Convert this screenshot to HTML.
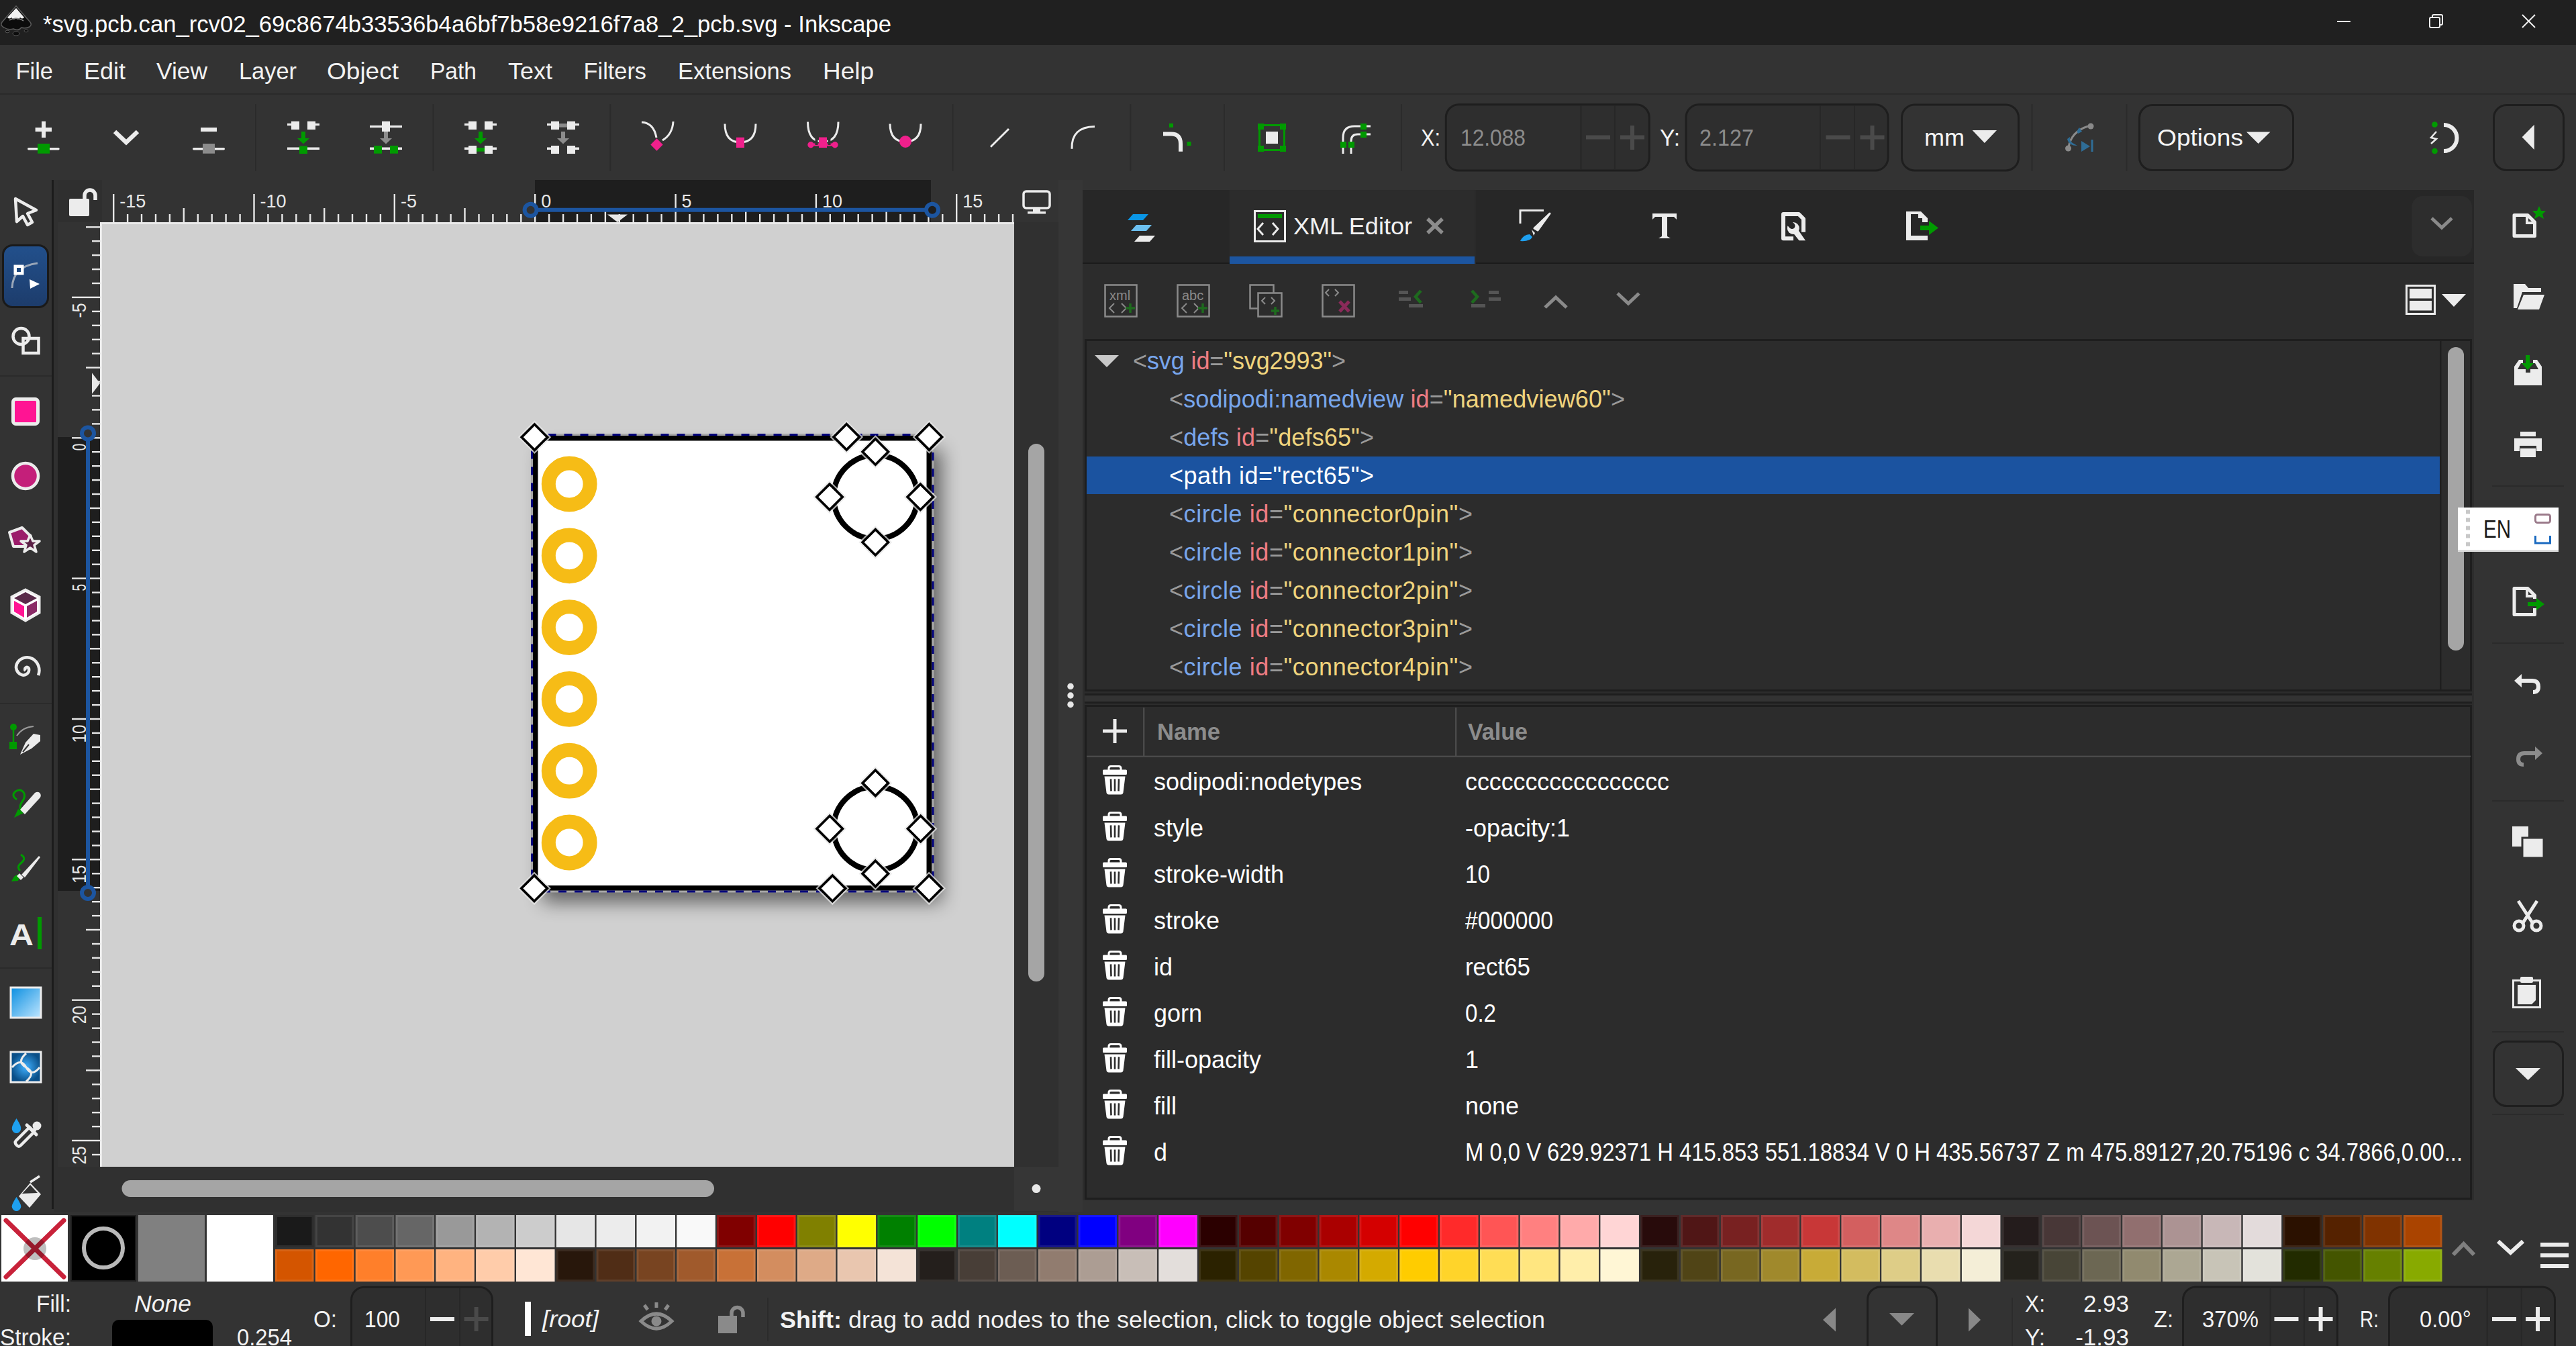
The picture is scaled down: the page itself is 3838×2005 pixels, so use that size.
<!DOCTYPE html><html><head><meta charset="utf-8"><style>html,body{margin:0;padding:0;background:#333;overflow:hidden}svg{display:block} text{font-family:"Liberation Sans",sans-serif}</style></head><body><svg width="3838" height="2005" viewBox="0 0 3838 2005"><rect x="0" y="0" width="3838" height="2005" fill="#333333" />
<rect x="0" y="0" width="3838" height="67" fill="#202020" />
<g><path d="M24,9 L45,33 Q48,37 44,40 Q38,43 32,41 Q27,47 20,43 Q12,45 6,41 Q0,38 3,33Z" fill="#0c0c0c" stroke="#5a5a5a" stroke-width="1.5"/><path d="M24,12 L36,26 Q33,29 30,26 Q27,31 24,27 Q20,31 17,26 Q14,29 11,26Z" fill="#f2f2f2"/><path d="M14,30 Q24,24 35,31" fill="none" stroke="#888" stroke-width="1.5"/><ellipse cx="24" cy="50" rx="5" ry="3" fill="#0c0c0c" stroke="#555" stroke-width="1"/><ellipse cx="11" cy="47" rx="3" ry="1.8" fill="#0c0c0c" stroke="#555" stroke-width="1"/><ellipse cx="39" cy="46" rx="3" ry="1.8" fill="#0c0c0c" stroke="#555" stroke-width="1"/></g>
<text x="64" y="48" font-size="35" fill="#ffffff" font-weight="normal" font-style="normal" text-anchor="start" textLength="1264" lengthAdjust="spacingAndGlyphs" >*svg.pcb.can_rcv02_69c8674b33536b4a6bf7b58e9216f7a8_2_pcb.svg - Inkscape</text>
<g stroke="#f0f0f0" stroke-width="2" fill="none"><line x1="3482" y1="32" x2="3502" y2="32"/><rect x="3620" y="26" width="15" height="15" rx="2"/><path d="M3624,26 V24 Q3624,22 3626,22 H3637 Q3639,22 3639,24 V35 Q3639,37 3637,37 H3635"/><line x1="3758" y1="22" x2="3777" y2="41"/><line x1="3777" y1="22" x2="3758" y2="41"/></g>
<rect x="0" y="67" width="3838" height="73" fill="#333333" />
<rect x="0" y="139" width="3838" height="2" fill="#2a2a2a" />
<text x="23.5" y="117.5" font-size="35" fill="#f2f2f2" font-weight="normal" font-style="normal" text-anchor="start" textLength="55.5" lengthAdjust="spacingAndGlyphs" >File</text>
<text x="125" y="117.5" font-size="35" fill="#f2f2f2" font-weight="normal" font-style="normal" text-anchor="start" textLength="62" lengthAdjust="spacingAndGlyphs" >Edit</text>
<text x="233" y="117.5" font-size="35" fill="#f2f2f2" font-weight="normal" font-style="normal" text-anchor="start" textLength="76" lengthAdjust="spacingAndGlyphs" >View</text>
<text x="356" y="117.5" font-size="35" fill="#f2f2f2" font-weight="normal" font-style="normal" text-anchor="start" textLength="86" lengthAdjust="spacingAndGlyphs" >Layer</text>
<text x="487" y="117.5" font-size="35" fill="#f2f2f2" font-weight="normal" font-style="normal" text-anchor="start" textLength="107" lengthAdjust="spacingAndGlyphs" >Object</text>
<text x="641" y="117.5" font-size="35" fill="#f2f2f2" font-weight="normal" font-style="normal" text-anchor="start" textLength="69" lengthAdjust="spacingAndGlyphs" >Path</text>
<text x="757" y="117.5" font-size="35" fill="#f2f2f2" font-weight="normal" font-style="normal" text-anchor="start" textLength="66" lengthAdjust="spacingAndGlyphs" >Text</text>
<text x="869.6" y="117.5" font-size="35" fill="#f2f2f2" font-weight="normal" font-style="normal" text-anchor="start" textLength="93.4" lengthAdjust="spacingAndGlyphs" >Filters</text>
<text x="1010" y="117.5" font-size="35" fill="#f2f2f2" font-weight="normal" font-style="normal" text-anchor="start" textLength="169" lengthAdjust="spacingAndGlyphs" >Extensions</text>
<text x="1226" y="117.5" font-size="35" fill="#f2f2f2" font-weight="normal" font-style="normal" text-anchor="start" textLength="76" lengthAdjust="spacingAndGlyphs" >Help</text>
<rect x="380.0" y="155" width="2" height="100" fill="#2b2b2b" />
<rect x="644.4" y="155" width="2" height="100" fill="#2b2b2b" />
<rect x="908.3" y="155" width="2" height="100" fill="#2b2b2b" />
<rect x="1418.5" y="155" width="2" height="100" fill="#2b2b2b" />
<rect x="1683.3" y="155" width="2" height="100" fill="#2b2b2b" />
<rect x="1823.0" y="155" width="2" height="100" fill="#2b2b2b" />
<rect x="2087.0" y="155" width="2" height="100" fill="#2b2b2b" />
<rect x="3026.5" y="155" width="2" height="100" fill="#2b2b2b" />
<rect x="3167.4" y="155" width="2" height="100" fill="#2b2b2b" />
<g><rect x="52.6" y="190" width="24.4" height="6" fill="#ececec"/><rect x="62" y="180.7" width="6" height="24.3" fill="#ececec"/><rect x="41" y="220" width="47.7" height="3.5" rx="1.7" fill="#ececec"/><rect x="56" y="214" width="18" height="14.7" fill="#009a00"/></g>
<path d="M171,196 L188,212 L205,196" fill="none" stroke="#ececec" stroke-width="6.5"/>
<g><rect x="299" y="190" width="24" height="6" fill="#ececec"/><rect x="287" y="220" width="48" height="3.5" rx="1.7" fill="#ececec"/><rect x="302" y="214" width="18" height="14.7" fill="#8c8c8c"/></g>
<g><rect x="428" y="183.8" width="8" height="3.3" fill="#ececec"/><rect x="468" y="183.8" width="8" height="3.3" fill="#ececec"/><rect x="434" y="180.7" width="12" height="12.3" fill="#ececec"/><rect x="458" y="180.7" width="12" height="12.3" fill="#ececec"/><rect x="449" y="196" width="6" height="10.5" fill="#009a00"/><path d="M443,206 H461 L452,214.5Z" fill="#009a00"/><rect x="428" y="219.5" width="48" height="3.5" fill="#ececec"/><rect x="446" y="217.5" width="12" height="11.5" fill="#009a00"/></g>
<g><rect x="551" y="186.8" width="48" height="3.3" fill="#ececec"/><rect x="569" y="180.7" width="12" height="15.3" fill="#ececec"/><rect x="572" y="196" width="6" height="10.5" fill="#8c8c8c"/><path d="M566,206 H584 L575,214.5Z" fill="#8c8c8c"/><rect x="551" y="219.5" width="48" height="3.5" fill="#ececec"/><rect x="557" y="217" width="12" height="11.7" fill="#009a00"/><rect x="581" y="217" width="12" height="11.7" fill="#009a00"/></g>
<g><rect x="692" y="183.8" width="8" height="3.3" fill="#ececec"/><rect x="732" y="183.8" width="8" height="3.3" fill="#ececec"/><rect x="698" y="180.7" width="12" height="12.3" fill="#ececec"/><rect x="722" y="180.7" width="12" height="12.3" fill="#ececec"/><rect x="713" y="196" width="6" height="10.5" fill="#009a00"/><path d="M707,206 H725 L716,214.5Z" fill="#009a00"/><rect x="692" y="219.5" width="8" height="3.5" fill="#ececec"/><rect x="732" y="219.5" width="8" height="3.5" fill="#ececec"/><rect x="698" y="217" width="12" height="12" fill="#ececec"/><rect x="722" y="217" width="12" height="12" fill="#ececec"/><rect x="710" y="220" width="12" height="5.7" fill="#009a00"/></g>
<g><rect x="815" y="183.8" width="8" height="3.3" fill="#ececec"/><rect x="855" y="183.8" width="8" height="3.3" fill="#ececec"/><rect x="821" y="180.7" width="12" height="12.3" fill="#ececec"/><rect x="845" y="180.7" width="12" height="12.3" fill="#ececec"/><rect x="833" y="184" width="12" height="5.6" fill="#8c8c8c"/><rect x="836" y="196" width="6" height="10.5" fill="#8c8c8c"/><path d="M830,206 H848 L839,214.5Z" fill="#8c8c8c"/><rect x="815" y="219.5" width="8" height="3.5" fill="#ececec"/><rect x="855" y="219.5" width="8" height="3.5" fill="#ececec"/><rect x="821" y="217" width="12" height="12" fill="#ececec"/><rect x="845" y="217" width="12" height="12" fill="#ececec"/></g>
<g fill="none" stroke="#ececec" stroke-width="3"><path d="M956,182 Q974,183 978,205"/><path d="M1003,181 Q1002,200 987,209"/></g><rect x="972" y="209" width="13" height="13" fill="#f0208c" transform="rotate(45 978.5 215.5)"/>
<path d="M1080,184.5 Q1080,212 1103,212 Q1126,212 1126,184.5" fill="none" stroke="#ececec" stroke-width="3"/><rect x="1097" y="204.7" width="12" height="15.3" fill="#f0208c"/>
<path d="M1203.5,181.4 Q1203.5,211 1226,211 Q1249,211 1249,181.4" fill="none" stroke="#ececec" stroke-width="3"/><rect x="1220" y="204.7" width="12" height="15.3" fill="#f0208c"/><rect x="1208" y="213.5" width="36" height="4" fill="#f0208c"/><circle cx="1208" cy="215.7" r="4.7" fill="#f0208c"/><circle cx="1244" cy="215.7" r="4.7" fill="#f0208c"/><rect x="1214.5" y="204" width="4" height="12" fill="#333"/><rect x="1233.5" y="204" width="4" height="12" fill="#333"/><rect x="1220" y="204.7" width="12" height="15.3" fill="#f0208c"/>
<path d="M1326,184.5 Q1326,211 1349,211 Q1372,211 1372,184.5" fill="none" stroke="#ececec" stroke-width="3"/><circle cx="1349" cy="211" r="9" fill="#f0208c"/>
<line x1="1476" y1="218.7" x2="1503" y2="192" stroke="#ececec" stroke-width="3"/>
<path d="M1597,221.7 Q1596,189 1631,188.5" fill="none" stroke="#ececec" stroke-width="3"/>
<path d="M1733,199.5 H1745 Q1759,199.5 1759,214 V225.7" fill="none" stroke="#ececec" stroke-width="6"/><rect x="1742" y="183.8" width="6" height="6" fill="#009a00"/><rect x="1768.6" y="211" width="6" height="6" fill="#009a00"/>
<rect x="1876.5" y="186.5" width="37" height="37" fill="none" stroke="#009a00" stroke-width="3"/><rect x="1874" y="184" width="9" height="9" fill="#009a00"/><rect x="1874" y="217" width="9" height="9" fill="#009a00"/><rect x="1907" y="184" width="9" height="9" fill="#009a00"/><rect x="1907" y="217" width="9" height="9" fill="#009a00"/><rect x="1886" y="196" width="18" height="18" fill="#ececec"/>
<g fill="none" stroke="#ececec" stroke-width="3"><path d="M2001,229 V205 Q2001,188 2018,188 H2042"/><path d="M2013,229 V210 Q2013,200 2023,200 H2042"/></g><rect x="1997" y="211" width="9" height="9" fill="#009a00"/><rect x="2009" y="211" width="9" height="9" fill="#009a00"/><rect x="2027" y="184" width="9" height="9" fill="#009a00"/><rect x="2027" y="196" width="9" height="9" fill="#009a00"/>
<text x="2117" y="216.8" font-size="35" fill="#f5f5f5" font-weight="normal" font-style="normal" text-anchor="start" textLength="29" lengthAdjust="spacingAndGlyphs" >X:</text>
<rect x="2154.3" y="155.8" width="302.89999999999964" height="98.29999999999998" rx="19" fill="#2e2e2e" stroke="#1e1e1e" stroke-width="3"/>
<rect x="2354.4" y="157.3" width="2" height="95.29999999999998" fill="#272727" />
<rect x="2404.9" y="157.3" width="2" height="95.29999999999998" fill="#272727" />
<text x="2176" y="216.8" font-size="35" fill="#8c8c8c" font-weight="normal" font-style="normal" text-anchor="start" textLength="97" lengthAdjust="spacingAndGlyphs" >12.088</text>
<rect x="2363" y="201.5" width="36" height="6" fill="#4a4a4a" />
<rect x="2414" y="201.5" width="36" height="6" fill="#4a4a4a" />
<rect x="2429" y="187" width="6" height="36" fill="#4a4a4a" />
<text x="2473" y="216.8" font-size="35" fill="#f5f5f5" font-weight="normal" font-style="normal" text-anchor="start" textLength="30" lengthAdjust="spacingAndGlyphs" >Y:</text>
<rect x="2512.0" y="155.8" width="301.0" height="98.29999999999998" rx="19" fill="#2e2e2e" stroke="#1e1e1e" stroke-width="3"/>
<rect x="2711" y="157.3" width="2" height="95.29999999999998" fill="#272727" />
<rect x="2762" y="157.3" width="2" height="95.29999999999998" fill="#272727" />
<text x="2532" y="216.8" font-size="35" fill="#8c8c8c" font-weight="normal" font-style="normal" text-anchor="start" textLength="81" lengthAdjust="spacingAndGlyphs" >2.127</text>
<rect x="2720.5" y="201.5" width="36" height="6" fill="#4a4a4a" />
<rect x="2771.5" y="201.5" width="36" height="6" fill="#4a4a4a" />
<rect x="2786.5" y="187" width="6" height="36" fill="#4a4a4a" />
<rect x="2833.5" y="156" width="174" height="98" rx="19" fill="#333" stroke="#1e1e1e" stroke-width="3"/>
<text x="2867" y="216.8" font-size="35" fill="#f5f5f5" font-weight="normal" font-style="normal" text-anchor="start" textLength="60" lengthAdjust="spacingAndGlyphs" >mm</text>
<path d="M2938.6,194 H2975 L2956.8,213Z" fill="#ececec"/>
<g><path d="M3082,219 Q3086,196 3111,188" fill="none" stroke="#8a8a8a" stroke-width="3"/><circle cx="3081.5" cy="221" r="4.5" fill="#8a8a8a"/><circle cx="3115" cy="188" r="4.5" fill="#8a8a8a"/><path d="M3080,207 Q3082,217 3095,217 L3088,213 Q3083,210 3084,204Z" fill="#2f6d96"/><path d="M3098,190 Q3093,195 3096,199 L3102,196Z" fill="#2f6d96"/><path d="M3101,210 L3114,218 L3101,226Z" fill="#2f6d96"/><rect x="3115.5" y="208" width="3" height="18" fill="#2f6d96"/></g>
<rect x="3187.5" y="156.5" width="229" height="97" rx="19" fill="#333" stroke="#1e1e1e" stroke-width="3"/>
<text x="3214" y="216.8" font-size="35" fill="#f5f5f5" font-weight="normal" font-style="normal" text-anchor="start" textLength="128" lengthAdjust="spacingAndGlyphs" >Options</text>
<path d="M3347,196.6 H3382.5 L3364.7,214Z" fill="#ececec"/>
<path d="M3641,186 A19.5,19.5 0 0 1 3641,225" fill="none" stroke="#ececec" stroke-width="6"/><circle cx="3627.5" cy="185.5" r="4.3" fill="#009a00"/><circle cx="3627.5" cy="225" r="4.3" fill="#009a00"/><path d="M3630,196 L3622,205 L3630,207 L3622,214" fill="none" stroke="#ececec" stroke-width="2.5"/>
<rect x="3715.5" y="156.5" width="104" height="97" rx="19" fill="#333" stroke="#1e1e1e" stroke-width="3"/>
<path d="M3775.8,185.7 V222.9 L3757.6,204.3Z" fill="#ececec"/>
<rect x="77" y="268" width="3" height="1533" fill="#1c1c1c" />
<rect x="0" y="559" width="77" height="2" fill="#2b2b2b" />
<rect x="0" y="1047" width="77" height="2" fill="#2b2b2b" />
<rect x="0" y="1441" width="77" height="2" fill="#2b2b2b" />
<defs><linearGradient id="selg" x1="0" y1="0" x2="0" y2="1"><stop offset="0" stop-color="#22508c"/><stop offset="1" stop-color="#1d3c6b"/></linearGradient><linearGradient id="gradt" x1="0" y1="0" x2="1" y2="1"><stop offset="0" stop-color="#0a8ee0"/><stop offset="1" stop-color="#bfe6ff"/></linearGradient><radialGradient id="meshg"><stop offset="0" stop-color="#3fb0ff"/><stop offset="1" stop-color="#0a4f88"/></radialGradient><filter id="pshadow" x="-20%" y="-20%" width="140%" height="140%"><feGaussianBlur stdDeviation="14"/></filter></defs>
<rect x="4.5" y="365.5" width="67" height="92" rx="14" fill="url(#selg)" stroke="#1a1a1a" stroke-width="3"/>
<path d="M23,296 L54,313 L41,318 L48,331 L41,335 L34,322 L25,330Z" fill="none" stroke="#ececec" stroke-width="4.5" stroke-linejoin="round"/>
<path d="M18,429 Q19,397 56,392" fill="none" stroke="#9aa7b8" stroke-width="3"/><rect x="20.5" y="394.5" width="15" height="15" fill="#fff"/><rect x="25" y="399" width="6" height="6" fill="#1f4a80"/><path d="M44,416 L59,423 L45,430Z" fill="#fff"/>
<circle cx="31.5" cy="501" r="12" fill="none" stroke="#ececec" stroke-width="4.5"/><rect x="34.5" y="504" width="23" height="22" fill="none" stroke="#ececec" stroke-width="4.5"/>
<rect x="19.5" y="594.5" width="37" height="37" rx="4" fill="#ff1493" stroke="#ececec" stroke-width="5"/>
<circle cx="38" cy="709" r="19" fill="#c41f7a" stroke="#ececec" stroke-width="4.5"/>
<path d="M14,793 L33,786 L46,799 L40,814 L20,814Z" fill="#9b1c6a" stroke="#ececec" stroke-width="4" stroke-linejoin="round"/><path d="M45,797 L49,806 L59,806 L51,812 L54,822 L45,816 L36,822 L39,812 L31,806 L41,806Z" fill="#5a1f45" stroke="#ececec" stroke-width="3.5" stroke-linejoin="round"/>
<path d="M38,878 L59,889 L59,913 L38,925 L17,913 L17,889Z" fill="#fff" stroke="#ececec" stroke-width="3"/><path d="M38,882 L55,891 L38,900 L21,891Z" fill="#5a2a4a"/><path d="M21,895 L36,903 L36,920 L21,911Z" fill="#ff1493"/><path d="M40,903 L55,895 L55,911 L40,920Z" fill="#8a2a66"/>
<path d="M38,997 m0,2 a3,3 0 1 1 5,-3 a8,8 0 0 1 -11,9 a12,12 0 0 1 -7,-16 a17,17 0 0 1 23,-8 a20,20 0 0 1 9,25 " fill="none" stroke="#ececec" stroke-width="4.5"/>
<path d="M20,1082 V1108" stroke="#009a00" stroke-width="2.5"/><circle cx="20" cy="1083" r="5" fill="#009a00"/><rect x="14" y="1105" width="11" height="11" fill="#009a00"/><path d="M25,1096 Q34,1083 50,1082" fill="none" stroke="#9a9a9a" stroke-width="2"/><path d="M60,1095 L50,1093 L38,1106 L30,1124 L47,1115 L60,1104Z" fill="#ececec"/><path d="M34,1120 L43,1109" stroke="#333" stroke-width="2"/>
<path d="M25,1191 Q16,1185 23,1179 Q30,1174 35,1180 Q39,1186 33,1194 Q27,1203 33,1208" fill="none" stroke="#009a00" stroke-width="3"/><path d="M21,1218 L27,1205 L35,1211Z" fill="#009a00"/><path d="M30,1206 L52,1181 Q57,1178 60,1182 Q62,1186 59,1189 L37,1213Z" fill="#ececec"/>
<path d="M31,1273 Q40,1278 32,1285 Q24,1291 30,1297" fill="none" stroke="#009a00" stroke-width="3"/><path d="M17,1313 Q22,1300 31,1303 L27,1312Z" fill="#009a00"/><path d="M32,1303 L58,1275 L60,1277 L37,1307Z" fill="#ececec"/><path d="M29,1301 L35,1307 L31,1311 L25,1305Z" fill="#ececec"/>
<text x="14" y="1408" font-size="44" fill="#ececec" font-weight="bold" font-style="normal" text-anchor="start" textLength="36" lengthAdjust="spacingAndGlyphs" >A</text>
<rect x="56" y="1366" width="6" height="48" fill="#009a00" />
<rect x="16" y="1471" width="45" height="45" fill="url(#gradt)" stroke="#ececec" stroke-width="3"/>
<rect x="16" y="1567" width="45" height="45" fill="url(#meshg)" stroke="#ececec" stroke-width="3"/><path d="M39,1569 Q24,1582 39,1590 Q54,1598 39,1611 M18,1590 Q31,1575 39,1590 Q47,1605 59,1590" fill="none" stroke="#ececec" stroke-width="3"/>
<path d="M24.5,1666 Q16,1679 18,1683 Q20,1688 24.5,1688 Q29,1688 31,1683 Q33,1679 24.5,1666Z" fill="#1ea0f0"/><path d="M25,1706 Q21,1702 24,1699 L44,1679 L51,1686 L31,1706 Q28,1709 25,1706Z" fill="none" stroke="#ececec" stroke-width="4.5" stroke-linejoin="round"/><path d="M40,1676 L54,1690" stroke="#ececec" stroke-width="5" stroke-linecap="round"/><path d="M47,1683 L56,1674 Q60,1670 58,1676 L52,1688Z" fill="#ececec"/><circle cx="55" cy="1677" r="6.5" fill="#ececec"/>
<path d="M28,1782 L45,1762 L61,1779 L44,1799Z" fill="#ececec"/><path d="M33,1778 L45,1765 L56,1777Z" fill="#333"/><path d="M45,1761 L59,1752" stroke="#ececec" stroke-width="3.5"/><path d="M24.5,1783 Q16,1796 18,1799 Q20,1804 24.5,1804 Q29,1804 31,1799 Q33,1796 24.5,1783Z" fill="#1ea0f0"/>
<rect x="80" y="268" width="1497" height="1537" fill="#303030" />
<rect x="86" y="268" width="66" height="63" fill="#2f2f2f" />
<rect x="103" y="296" width="30" height="26" rx="2" fill="#ececec"/><path d="M126,298 V291 A8,8 0 0 1 142,291 V298" fill="none" stroke="#ececec" stroke-width="5.5"/>
<rect x="152" y="268" width="1359" height="63" fill="#333333" />
<rect x="797" y="268" width="590" height="63" fill="#1e1e1e" />
<rect x="152" y="331" width="1359" height="3" fill="#ebebeb" />
<rect x="86" y="331" width="63" height="1407" fill="#333333" />
<rect x="86" y="651" width="63" height="676" fill="#1e1e1e" />
<rect x="149" y="331" width="3" height="1407" fill="#ebebeb" />
<rect x="152" y="334" width="1359" height="1404" fill="#d0d0d0" />
<rect x="168.0" y="289" width="2.4" height="42" fill="#e8e8e8"/><text x="178.2" y="309" font-size="27" fill="#e8e8e8">-15</text><rect x="188.9" y="319" width="2.4" height="12" fill="#e8e8e8"/><rect x="209.8" y="319" width="2.4" height="12" fill="#e8e8e8"/><rect x="230.8" y="319" width="2.4" height="12" fill="#e8e8e8"/><rect x="251.7" y="319" width="2.4" height="12" fill="#e8e8e8"/><rect x="272.6" y="310" width="2.4" height="21" fill="#e8e8e8"/><rect x="293.6" y="319" width="2.4" height="12" fill="#e8e8e8"/><rect x="314.5" y="319" width="2.4" height="12" fill="#e8e8e8"/><rect x="335.4" y="319" width="2.4" height="12" fill="#e8e8e8"/><rect x="356.4" y="319" width="2.4" height="12" fill="#e8e8e8"/><rect x="377.3" y="289" width="2.4" height="42" fill="#e8e8e8"/><text x="387.5" y="309" font-size="27" fill="#e8e8e8">-10</text><rect x="398.2" y="319" width="2.4" height="12" fill="#e8e8e8"/><rect x="419.2" y="319" width="2.4" height="12" fill="#e8e8e8"/><rect x="440.1" y="319" width="2.4" height="12" fill="#e8e8e8"/><rect x="461.0" y="319" width="2.4" height="12" fill="#e8e8e8"/><rect x="482.0" y="310" width="2.4" height="21" fill="#e8e8e8"/><rect x="502.9" y="319" width="2.4" height="12" fill="#e8e8e8"/><rect x="523.8" y="319" width="2.4" height="12" fill="#e8e8e8"/><rect x="544.8" y="319" width="2.4" height="12" fill="#e8e8e8"/><rect x="565.7" y="319" width="2.4" height="12" fill="#e8e8e8"/><rect x="586.6" y="289" width="2.4" height="42" fill="#e8e8e8"/><text x="596.9" y="309" font-size="27" fill="#e8e8e8">-5</text><rect x="607.6" y="319" width="2.4" height="12" fill="#e8e8e8"/><rect x="628.5" y="319" width="2.4" height="12" fill="#e8e8e8"/><rect x="649.5" y="319" width="2.4" height="12" fill="#e8e8e8"/><rect x="670.4" y="319" width="2.4" height="12" fill="#e8e8e8"/><rect x="691.3" y="310" width="2.4" height="21" fill="#e8e8e8"/><rect x="712.3" y="319" width="2.4" height="12" fill="#e8e8e8"/><rect x="733.2" y="319" width="2.4" height="12" fill="#e8e8e8"/><rect x="754.1" y="319" width="2.4" height="12" fill="#e8e8e8"/><rect x="775.1" y="319" width="2.4" height="12" fill="#e8e8e8"/><rect x="796.0" y="289" width="2.4" height="42" fill="#e8e8e8"/><text x="806.2" y="309" font-size="27" fill="#e8e8e8">0</text><rect x="816.9" y="319" width="2.4" height="12" fill="#e8e8e8"/><rect x="837.9" y="319" width="2.4" height="12" fill="#e8e8e8"/><rect x="858.8" y="319" width="2.4" height="12" fill="#e8e8e8"/><rect x="879.7" y="319" width="2.4" height="12" fill="#e8e8e8"/><rect x="900.7" y="310" width="2.4" height="21" fill="#e8e8e8"/><rect x="921.6" y="319" width="2.4" height="12" fill="#e8e8e8"/><rect x="942.5" y="319" width="2.4" height="12" fill="#e8e8e8"/><rect x="963.5" y="319" width="2.4" height="12" fill="#e8e8e8"/><rect x="984.4" y="319" width="2.4" height="12" fill="#e8e8e8"/><rect x="1005.4" y="289" width="2.4" height="42" fill="#e8e8e8"/><text x="1015.6" y="309" font-size="27" fill="#e8e8e8">5</text><rect x="1026.3" y="319" width="2.4" height="12" fill="#e8e8e8"/><rect x="1047.2" y="319" width="2.4" height="12" fill="#e8e8e8"/><rect x="1068.2" y="319" width="2.4" height="12" fill="#e8e8e8"/><rect x="1089.1" y="319" width="2.4" height="12" fill="#e8e8e8"/><rect x="1110.0" y="310" width="2.4" height="21" fill="#e8e8e8"/><rect x="1131.0" y="319" width="2.4" height="12" fill="#e8e8e8"/><rect x="1151.9" y="319" width="2.4" height="12" fill="#e8e8e8"/><rect x="1172.8" y="319" width="2.4" height="12" fill="#e8e8e8"/><rect x="1193.8" y="319" width="2.4" height="12" fill="#e8e8e8"/><rect x="1214.7" y="289" width="2.4" height="42" fill="#e8e8e8"/><text x="1224.9" y="309" font-size="27" fill="#e8e8e8">10</text><rect x="1235.6" y="319" width="2.4" height="12" fill="#e8e8e8"/><rect x="1256.6" y="319" width="2.4" height="12" fill="#e8e8e8"/><rect x="1277.5" y="319" width="2.4" height="12" fill="#e8e8e8"/><rect x="1298.4" y="319" width="2.4" height="12" fill="#e8e8e8"/><rect x="1319.4" y="310" width="2.4" height="21" fill="#e8e8e8"/><rect x="1340.3" y="319" width="2.4" height="12" fill="#e8e8e8"/><rect x="1361.2" y="319" width="2.4" height="12" fill="#e8e8e8"/><rect x="1382.2" y="319" width="2.4" height="12" fill="#e8e8e8"/><rect x="1403.1" y="319" width="2.4" height="12" fill="#e8e8e8"/><rect x="1424.0" y="289" width="2.4" height="42" fill="#e8e8e8"/><text x="1434.2" y="309" font-size="27" fill="#e8e8e8">15</text><rect x="1445.0" y="319" width="2.4" height="12" fill="#e8e8e8"/><rect x="1465.9" y="319" width="2.4" height="12" fill="#e8e8e8"/><rect x="1486.9" y="319" width="2.4" height="12" fill="#e8e8e8"/><rect x="1507.8" y="319" width="2.4" height="12" fill="#e8e8e8"/>
<rect x="128" y="337.1" width="21" height="2.4" fill="#e8e8e8"/><rect x="137" y="358.0" width="12" height="2.4" fill="#e8e8e8"/><rect x="137" y="378.9" width="12" height="2.4" fill="#e8e8e8"/><rect x="137" y="399.9" width="12" height="2.4" fill="#e8e8e8"/><rect x="137" y="420.8" width="12" height="2.4" fill="#e8e8e8"/><rect x="107" y="441.7" width="42" height="2.4" fill="#e8e8e8"/><text transform="translate(128,473.4) rotate(-90)" font-size="29" fill="#e8e8e8" textLength="22" lengthAdjust="spacingAndGlyphs">-5</text><rect x="137" y="462.7" width="12" height="2.4" fill="#e8e8e8"/><rect x="137" y="483.6" width="12" height="2.4" fill="#e8e8e8"/><rect x="137" y="504.6" width="12" height="2.4" fill="#e8e8e8"/><rect x="137" y="525.5" width="12" height="2.4" fill="#e8e8e8"/><rect x="128" y="546.4" width="21" height="2.4" fill="#e8e8e8"/><rect x="137" y="567.4" width="12" height="2.4" fill="#e8e8e8"/><rect x="137" y="588.3" width="12" height="2.4" fill="#e8e8e8"/><rect x="137" y="609.2" width="12" height="2.4" fill="#e8e8e8"/><rect x="137" y="630.2" width="12" height="2.4" fill="#e8e8e8"/><rect x="107" y="651.1" width="42" height="2.4" fill="#e8e8e8"/><text transform="translate(128,671.3) rotate(-90)" font-size="29" fill="#e8e8e8" textLength="10.5" lengthAdjust="spacingAndGlyphs">0</text><rect x="137" y="672.0" width="12" height="2.4" fill="#e8e8e8"/><rect x="137" y="693.0" width="12" height="2.4" fill="#e8e8e8"/><rect x="137" y="713.9" width="12" height="2.4" fill="#e8e8e8"/><rect x="137" y="734.8" width="12" height="2.4" fill="#e8e8e8"/><rect x="128" y="755.8" width="21" height="2.4" fill="#e8e8e8"/><rect x="137" y="776.7" width="12" height="2.4" fill="#e8e8e8"/><rect x="137" y="797.6" width="12" height="2.4" fill="#e8e8e8"/><rect x="137" y="818.6" width="12" height="2.4" fill="#e8e8e8"/><rect x="137" y="839.5" width="12" height="2.4" fill="#e8e8e8"/><rect x="107" y="860.4" width="42" height="2.4" fill="#e8e8e8"/><text transform="translate(128,880.6) rotate(-90)" font-size="29" fill="#e8e8e8" textLength="10.5" lengthAdjust="spacingAndGlyphs">5</text><rect x="137" y="881.4" width="12" height="2.4" fill="#e8e8e8"/><rect x="137" y="902.3" width="12" height="2.4" fill="#e8e8e8"/><rect x="137" y="923.3" width="12" height="2.4" fill="#e8e8e8"/><rect x="137" y="944.2" width="12" height="2.4" fill="#e8e8e8"/><rect x="128" y="965.1" width="21" height="2.4" fill="#e8e8e8"/><rect x="137" y="986.1" width="12" height="2.4" fill="#e8e8e8"/><rect x="137" y="1007.0" width="12" height="2.4" fill="#e8e8e8"/><rect x="137" y="1027.9" width="12" height="2.4" fill="#e8e8e8"/><rect x="137" y="1048.9" width="12" height="2.4" fill="#e8e8e8"/><rect x="107" y="1069.8" width="42" height="2.4" fill="#e8e8e8"/><text transform="translate(128,1106.5) rotate(-90)" font-size="29" fill="#e8e8e8" textLength="27" lengthAdjust="spacingAndGlyphs">10</text><rect x="137" y="1090.7" width="12" height="2.4" fill="#e8e8e8"/><rect x="137" y="1111.7" width="12" height="2.4" fill="#e8e8e8"/><rect x="137" y="1132.6" width="12" height="2.4" fill="#e8e8e8"/><rect x="137" y="1153.5" width="12" height="2.4" fill="#e8e8e8"/><rect x="128" y="1174.5" width="21" height="2.4" fill="#e8e8e8"/><rect x="137" y="1195.4" width="12" height="2.4" fill="#e8e8e8"/><rect x="137" y="1216.3" width="12" height="2.4" fill="#e8e8e8"/><rect x="137" y="1237.3" width="12" height="2.4" fill="#e8e8e8"/><rect x="137" y="1258.2" width="12" height="2.4" fill="#e8e8e8"/><rect x="107" y="1279.1" width="42" height="2.4" fill="#e8e8e8"/><text transform="translate(128,1315.8) rotate(-90)" font-size="29" fill="#e8e8e8" textLength="27" lengthAdjust="spacingAndGlyphs">15</text><rect x="137" y="1300.1" width="12" height="2.4" fill="#e8e8e8"/><rect x="137" y="1321.0" width="12" height="2.4" fill="#e8e8e8"/><rect x="137" y="1342.0" width="12" height="2.4" fill="#e8e8e8"/><rect x="137" y="1362.9" width="12" height="2.4" fill="#e8e8e8"/><rect x="128" y="1383.8" width="21" height="2.4" fill="#e8e8e8"/><rect x="137" y="1404.8" width="12" height="2.4" fill="#e8e8e8"/><rect x="137" y="1425.7" width="12" height="2.4" fill="#e8e8e8"/><rect x="137" y="1446.6" width="12" height="2.4" fill="#e8e8e8"/><rect x="137" y="1467.6" width="12" height="2.4" fill="#e8e8e8"/><rect x="107" y="1488.5" width="42" height="2.4" fill="#e8e8e8"/><text transform="translate(128,1525.2) rotate(-90)" font-size="29" fill="#e8e8e8" textLength="27" lengthAdjust="spacingAndGlyphs">20</text><rect x="137" y="1509.4" width="12" height="2.4" fill="#e8e8e8"/><rect x="137" y="1530.4" width="12" height="2.4" fill="#e8e8e8"/><rect x="137" y="1551.3" width="12" height="2.4" fill="#e8e8e8"/><rect x="137" y="1572.2" width="12" height="2.4" fill="#e8e8e8"/><rect x="128" y="1593.2" width="21" height="2.4" fill="#e8e8e8"/><rect x="137" y="1614.1" width="12" height="2.4" fill="#e8e8e8"/><rect x="137" y="1635.0" width="12" height="2.4" fill="#e8e8e8"/><rect x="137" y="1656.0" width="12" height="2.4" fill="#e8e8e8"/><rect x="137" y="1676.9" width="12" height="2.4" fill="#e8e8e8"/><rect x="107" y="1697.8" width="42" height="2.4" fill="#e8e8e8"/><text transform="translate(128,1734.5) rotate(-90)" font-size="29" fill="#e8e8e8" textLength="27" lengthAdjust="spacingAndGlyphs">25</text><rect x="137" y="1718.8" width="12" height="2.4" fill="#e8e8e8"/>
<line x1="790.6" y1="312.8" x2="1389" y2="312.8" stroke="#1c55a0" stroke-width="6"/><circle cx="790.6" cy="312.8" r="9" fill="#333" stroke="#1c55a0" stroke-width="6"/><circle cx="1389" cy="312.8" r="9" fill="#1e1e1e" stroke="#1c55a0" stroke-width="6"/><path d="M905,319.4 H935 L920,331Z" fill="#e8e8e8"/>
<line x1="131" y1="645.4" x2="131" y2="1330" stroke="#1c55a0" stroke-width="6"/><circle cx="131" cy="645.4" r="9" fill="#333" stroke="#1c55a0" stroke-width="6"/><circle cx="131" cy="1330" r="9" fill="#333" stroke="#1c55a0" stroke-width="6"/><path d="M137,555.5 V586.7 L149,571Z" fill="#e8e8e8"/>
<g clip-path="url(#cvclip)">
<defs><clipPath id="cvclip"><rect x="152" y="334" width="1359" height="1404"/></clipPath></defs>
<rect x="808" y="670" width="595" height="674" fill="#000" opacity="0.52" filter="url(#pshadow)"/>
<rect x="794" y="648" width="595" height="680" fill="#ffffff" />
<circle cx="848.2" cy="721.0" r="30.9" fill="none" stroke="#f6bc16" stroke-width="21"/>
<circle cx="848.2" cy="827.8" r="30.9" fill="none" stroke="#f6bc16" stroke-width="21"/>
<circle cx="848.2" cy="934.6" r="30.9" fill="none" stroke="#f6bc16" stroke-width="21"/>
<circle cx="848.2" cy="1041.4" r="30.9" fill="none" stroke="#f6bc16" stroke-width="21"/>
<circle cx="848.2" cy="1148.2" r="30.9" fill="none" stroke="#f6bc16" stroke-width="21"/>
<circle cx="848.2" cy="1255.0" r="30.9" fill="none" stroke="#f6bc16" stroke-width="21"/>
<circle cx="1304.4" cy="740.3" r="62.4" fill="none" stroke="#000" stroke-width="8.3"/>
<circle cx="1304.4" cy="1234" r="62.4" fill="none" stroke="#000" stroke-width="8.3"/>
<rect x="797.5" y="652.5" width="587" height="670.5" fill="none" stroke="#000" stroke-width="8"/>
<rect x="792.5" y="647.5" width="597.5" height="680.5" fill="none" stroke="#a8a8a8" stroke-width="3"/><rect x="792.5" y="647.5" width="597.5" height="680.5" fill="none" stroke="#00007a" stroke-width="3" stroke-dasharray="12 12"/>
<path d="M796.4,628.2 L819.4,651.2 L796.4,674.2 L773.4,651.2Z" fill="none" stroke="#e6e6e6" stroke-width="2.6" opacity="0.75"/><path d="M796.4,632.0 L815.6,651.2 L796.4,670.4000000000001 L777.1999999999999,651.2Z" fill="#fff" stroke="#000" stroke-width="3.7"/>
<path d="M1261.3,627.9 L1284.3,650.9 L1261.3,673.9 L1238.3,650.9Z" fill="none" stroke="#e6e6e6" stroke-width="2.6" opacity="0.75"/><path d="M1261.3,631.6999999999999 L1280.5,650.9 L1261.3,670.1 L1242.1,650.9Z" fill="#fff" stroke="#000" stroke-width="3.7"/>
<path d="M1384.4,627.9 L1407.4,650.9 L1384.4,673.9 L1361.4,650.9Z" fill="none" stroke="#e6e6e6" stroke-width="2.6" opacity="0.75"/><path d="M1384.4,631.6999999999999 L1403.6000000000001,650.9 L1384.4,670.1 L1365.2,650.9Z" fill="#fff" stroke="#000" stroke-width="3.7"/>
<path d="M1304.3,650 L1327.3,673 L1304.3,696 L1281.3,673Z" fill="none" stroke="#e6e6e6" stroke-width="2.6" opacity="0.75"/><path d="M1304.3,653.8 L1323.5,673 L1304.3,692.2 L1285.1,673Z" fill="#fff" stroke="#000" stroke-width="3.7"/>
<path d="M1236,717.3 L1259,740.3 L1236,763.3 L1213,740.3Z" fill="none" stroke="#e6e6e6" stroke-width="2.6" opacity="0.75"/><path d="M1236,721.0999999999999 L1255.2,740.3 L1236,759.5 L1216.8,740.3Z" fill="#fff" stroke="#000" stroke-width="3.7"/>
<path d="M1371.3,717.3 L1394.3,740.3 L1371.3,763.3 L1348.3,740.3Z" fill="none" stroke="#e6e6e6" stroke-width="2.6" opacity="0.75"/><path d="M1371.3,721.0999999999999 L1390.5,740.3 L1371.3,759.5 L1352.1,740.3Z" fill="#fff" stroke="#000" stroke-width="3.7"/>
<path d="M1304.3,784.8 L1327.3,807.8 L1304.3,830.8 L1281.3,807.8Z" fill="none" stroke="#e6e6e6" stroke-width="2.6" opacity="0.75"/><path d="M1304.3,788.5999999999999 L1323.5,807.8 L1304.3,827.0 L1285.1,807.8Z" fill="#fff" stroke="#000" stroke-width="3.7"/>
<path d="M1304.3,1143.4 L1327.3,1166.4 L1304.3,1189.4 L1281.3,1166.4Z" fill="none" stroke="#e6e6e6" stroke-width="2.6" opacity="0.75"/><path d="M1304.3,1147.2 L1323.5,1166.4 L1304.3,1185.6000000000001 L1285.1,1166.4Z" fill="#fff" stroke="#000" stroke-width="3.7"/>
<path d="M1236.2,1211.5 L1259.2,1234.5 L1236.2,1257.5 L1213.2,1234.5Z" fill="none" stroke="#e6e6e6" stroke-width="2.6" opacity="0.75"/><path d="M1236.2,1215.3 L1255.4,1234.5 L1236.2,1253.7 L1217.0,1234.5Z" fill="#fff" stroke="#000" stroke-width="3.7"/>
<path d="M1371.7,1211.5 L1394.7,1234.5 L1371.7,1257.5 L1348.7,1234.5Z" fill="none" stroke="#e6e6e6" stroke-width="2.6" opacity="0.75"/><path d="M1371.7,1215.3 L1390.9,1234.5 L1371.7,1253.7 L1352.5,1234.5Z" fill="#fff" stroke="#000" stroke-width="3.7"/>
<path d="M1304.3,1278.4 L1327.3,1301.4 L1304.3,1324.4 L1281.3,1301.4Z" fill="none" stroke="#e6e6e6" stroke-width="2.6" opacity="0.75"/><path d="M1304.3,1282.2 L1323.5,1301.4 L1304.3,1320.6000000000001 L1285.1,1301.4Z" fill="#fff" stroke="#000" stroke-width="3.7"/>
<path d="M796,1300.3 L819,1323.3 L796,1346.3 L773,1323.3Z" fill="none" stroke="#e6e6e6" stroke-width="2.6" opacity="0.75"/><path d="M796,1304.1 L815.2,1323.3 L796,1342.5 L776.8,1323.3Z" fill="#fff" stroke="#000" stroke-width="3.7"/>
<path d="M1240.3,1300.3 L1263.3,1323.3 L1240.3,1346.3 L1217.3,1323.3Z" fill="none" stroke="#e6e6e6" stroke-width="2.6" opacity="0.75"/><path d="M1240.3,1304.1 L1259.5,1323.3 L1240.3,1342.5 L1221.1,1323.3Z" fill="#fff" stroke="#000" stroke-width="3.7"/>
<path d="M1384.2,1300.3 L1407.2,1323.3 L1384.2,1346.3 L1361.2,1323.3Z" fill="none" stroke="#e6e6e6" stroke-width="2.6" opacity="0.75"/><path d="M1384.2,1304.1 L1403.4,1323.3 L1384.2,1342.5 L1365.0,1323.3Z" fill="#fff" stroke="#000" stroke-width="3.7"/>
</g>
<rect x="1511" y="268" width="66" height="63" fill="#333333" />
<rect x="1525" y="285" width="39" height="25" rx="4" fill="none" stroke="#ececec" stroke-width="3.5"/><rect x="1539" y="311" width="11" height="4" fill="#ececec"/><rect x="1531" y="315" width="27" height="3.5" fill="#ececec"/>
<rect x="1532" y="661" width="24" height="801" rx="12" fill="#a5a5a5"/>
<rect x="1577" y="268" width="36" height="1537" fill="#363636" />
<circle cx="1595" cy="1022.4" r="4.7" fill="#e8e8e8"/>
<circle cx="1595" cy="1036" r="4.7" fill="#e8e8e8"/>
<circle cx="1595" cy="1049.5" r="4.7" fill="#e8e8e8"/>
<rect x="181.5" y="1758" width="882.5" height="25" rx="12.5" fill="#a5a5a5"/>
<rect x="1511" y="1738" width="66" height="66" fill="#363636" />
<circle cx="1544" cy="1770.6" r="6.5" fill="#e8e8e8"/>
<rect x="1613" y="283" width="2073" height="110" fill="#272727" />
<rect x="1832" y="283" width="366" height="110" fill="#2c2c2c" />
<rect x="1613" y="391" width="2073" height="2.5" fill="#1b1b1b" />
<rect x="1832" y="382" width="366" height="11" fill="#1c55a0" />
<rect x="2197" y="283" width="2" height="110" fill="#2a2a2a" />
<path d="M1688,319 H1711 L1703,328 H1680Z" fill="#0a96e6"/><path d="M1693,335 H1716 L1708,344 H1685Z" fill="#6cc0f0"/><path d="M1698,351 H1721 L1713,360 H1690Z" fill="#ececec"/>
<rect x="1869.5" y="314.5" width="45" height="45" fill="none" stroke="#ececec" stroke-width="3"/><rect x="1874" y="319" width="36" height="6" fill="#009a00"/><path d="M1882,332 L1874,341 L1882,350 M1896,332 L1904,341 L1896,350" fill="none" stroke="#ececec" stroke-width="3"/>
<text x="1927" y="349" font-size="35" fill="#f2f2f2" font-weight="normal" font-style="normal" text-anchor="start" textLength="177" lengthAdjust="spacingAndGlyphs" >XML Editor</text>
<path d="M2127,326 L2149,347 M2149,326 L2127,347" stroke="#8c8c8c" stroke-width="5.5"/>
<path d="M2265,333 V313.5 H2300" fill="none" stroke="#ececec" stroke-width="3"/><path d="M2309,318 L2291,343 L2286,340Z" fill="#ececec" stroke="#ececec" stroke-width="3" stroke-linejoin="round"/><path d="M2282,342 L2287,347 L2285,351Z" fill="#ececec"/><path d="M2265,359 Q2270,349 2279,349 L2283,353 Q2280,360 2265,359Z" fill="#1ea0f0"/>
<path d="M2462,318 H2498 V327 L2494,323 H2484 V352 L2489,355 H2471 L2476,352 V323 H2466 L2462,327Z" fill="#ececec"/>
<path d="M2672,355.2 H2657 V319 H2680 L2687,326 V345.8" fill="none" stroke="#ececec" stroke-width="6" stroke-linejoin="round"/><circle cx="2671.8" cy="340" r="9" fill="#ececec"/><path d="M2675.4,337.3 L2690,358.2 H2680.5 L2668.2,342.7Z" fill="#ececec"/><path d="M2673.2,333.3 L2666.1,326.2 L2659.7,332.6 L2666.8,339.7Z" fill="#272727"/><circle cx="2670" cy="336.5" r="4.5" fill="#272727"/>
<path d="M2840,315 H2862 L2872,325 V331 H2864 V325 H2858 V319 H2847 V351 H2872 V358 H2840Z" fill="#ececec"/><rect x="2861" y="336" width="16" height="7" fill="#009a00"/><path d="M2874,329 L2888,339.5 L2874,350Z" fill="#009a00"/>
<rect x="3593.5" y="292" width="89.5" height="90" rx="16" fill="#2d2d2d"/>
<path d="M3623,325 L3638,339 L3653,325" fill="none" stroke="#8a8a8a" stroke-width="5"/>
<rect x="1613" y="393" width="2073" height="1395" fill="#2c2c2c" />
<rect x="3686" y="268" width="152" height="1537" fill="#333333" />
<rect x="1646.5" y="424.5" width="47" height="47" fill="none" stroke="#8a8a8a" stroke-width="2.5"/><text x="1653" y="447" font-size="20" fill="#8a8a8a">xml</text><path d="M1660,452 L1653,459 L1660,466 M1671,452 L1678,459 L1671,466" fill="none" stroke="#8a8a8a" stroke-width="2"/><path d="M1684,452 V466 M1677,459 H1691" stroke="#1e6b1e" stroke-width="3.5"/>
<rect x="1754.5" y="424.5" width="47" height="47" fill="none" stroke="#8a8a8a" stroke-width="2.5"/><text x="1761" y="447" font-size="20" fill="#8a8a8a">abc</text><path d="M1768,452 L1761,459 L1768,466 M1779,452 L1786,459 L1779,466" fill="none" stroke="#8a8a8a" stroke-width="2"/><path d="M1792,452 V466 M1785,459 H1799" stroke="#1e6b1e" stroke-width="3.5"/>
<rect x="1862.5" y="424.5" width="35" height="35" fill="none" stroke="#8a8a8a" stroke-width="2.5"/><rect x="1874.5" y="436.5" width="35" height="35" fill="#2c2c2c" stroke="#8a8a8a" stroke-width="2.5"/><path d="M1885,443 L1880,448 L1885,453 M1894,443 L1899,448 L1894,453" fill="none" stroke="#8a8a8a" stroke-width="2"/><path d="M1900,457 V469 M1894,463 H1906" stroke="#1e6b1e" stroke-width="3.5"/>
<rect x="1970.5" y="424.5" width="47" height="47" fill="none" stroke="#8a8a8a" stroke-width="2.5"/><path d="M1980,431 L1975,436 L1980,441 M1989,431 L1994,436 L1989,441" fill="none" stroke="#8a8a8a" stroke-width="2"/><path d="M1996,449 L2010,464 M2010,449 L1996,464" stroke="#8b2a5a" stroke-width="5"/>
<rect x="2084" y="433" width="14" height="5" fill="#555"/><rect x="2084" y="443" width="18" height="5" fill="#555"/><rect x="2099" y="453" width="21" height="5" fill="#555"/><path d="M2117,433 L2109,442 L2117,451" fill="none" stroke="#1e6b1e" stroke-width="4.5"/>
<rect x="2218" y="433" width="15" height="5" fill="#555"/><rect x="2218" y="443" width="18" height="5" fill="#555"/><rect x="2192" y="453" width="21" height="5" fill="#555"/><path d="M2193,433 L2201,442 L2193,451" fill="none" stroke="#1e6b1e" stroke-width="4.5"/>
<path d="M2302,458 L2318,443 L2334,458" fill="none" stroke="#8a8a8a" stroke-width="5"/><path d="M2410,437 L2426,452 L2442,437" fill="none" stroke="#8a8a8a" stroke-width="5"/>
<rect x="3585.5" y="425.5" width="42" height="42" fill="none" stroke="#ececec" stroke-width="3"/><rect x="3590" y="430" width="33" height="14.5" fill="#ececec"/><rect x="3590" y="448" width="33" height="14.5" fill="#ececec"/><path d="M3638,438 H3674 L3656,457Z" fill="#ececec"/>
<rect x="1617.5" y="506.5" width="2064" height="522" fill="#2c2c2c" stroke="#1e1e1e" stroke-width="3"/>
<rect x="1619" y="680" width="2017" height="56" fill="#1b53a0" />
<path d="M1631,529 H1667 L1649,547Z" fill="#c8c8c8"/>
<rect x="3635" y="508" width="2.5" height="519" fill="#1e1e1e" />
<rect x="3647" y="517" width="24" height="452" rx="12" fill="#a5a5a5"/>
<text x="1688" y="549.8" font-size="36" xml:space="preserve" textLength="317" lengthAdjust="spacing"><tspan fill="#9a9a9a">&lt;</tspan><tspan fill="#78a6ec">svg</tspan> <tspan fill="#ee7d84">id</tspan><tspan fill="#9a9a9a">=</tspan><tspan fill="#f0d47e">"svg2993"</tspan><tspan fill="#9a9a9a">&gt;</tspan></text>
<text x="1742" y="606.8" font-size="36" xml:space="preserve" textLength="679" lengthAdjust="spacing"><tspan fill="#9a9a9a">&lt;</tspan><tspan fill="#78a6ec">sodipodi:namedview</tspan> <tspan fill="#ee7d84">id</tspan><tspan fill="#9a9a9a">=</tspan><tspan fill="#f0d47e">"namedview60"</tspan><tspan fill="#9a9a9a">&gt;</tspan></text>
<text x="1742" y="663.8" font-size="36" xml:space="preserve" textLength="305" lengthAdjust="spacing"><tspan fill="#9a9a9a">&lt;</tspan><tspan fill="#78a6ec">defs</tspan> <tspan fill="#ee7d84">id</tspan><tspan fill="#9a9a9a">=</tspan><tspan fill="#f0d47e">"defs65"</tspan><tspan fill="#9a9a9a">&gt;</tspan></text>
<text x="1742" y="720.8" font-size="36" fill="#fff" xml:space="preserve" textLength="305" lengthAdjust="spacing">&lt;path id="rect65"&gt;</text>
<text x="1742" y="777.8" font-size="36" xml:space="preserve" textLength="452" lengthAdjust="spacing"><tspan fill="#9a9a9a">&lt;</tspan><tspan fill="#78a6ec">circle</tspan> <tspan fill="#ee7d84">id</tspan><tspan fill="#9a9a9a">=</tspan><tspan fill="#f0d47e">"connector0pin"</tspan><tspan fill="#9a9a9a">&gt;</tspan></text>
<text x="1742" y="834.8" font-size="36" xml:space="preserve" textLength="452" lengthAdjust="spacing"><tspan fill="#9a9a9a">&lt;</tspan><tspan fill="#78a6ec">circle</tspan> <tspan fill="#ee7d84">id</tspan><tspan fill="#9a9a9a">=</tspan><tspan fill="#f0d47e">"connector1pin"</tspan><tspan fill="#9a9a9a">&gt;</tspan></text>
<text x="1742" y="891.8" font-size="36" xml:space="preserve" textLength="452" lengthAdjust="spacing"><tspan fill="#9a9a9a">&lt;</tspan><tspan fill="#78a6ec">circle</tspan> <tspan fill="#ee7d84">id</tspan><tspan fill="#9a9a9a">=</tspan><tspan fill="#f0d47e">"connector2pin"</tspan><tspan fill="#9a9a9a">&gt;</tspan></text>
<text x="1742" y="948.8" font-size="36" xml:space="preserve" textLength="452" lengthAdjust="spacing"><tspan fill="#9a9a9a">&lt;</tspan><tspan fill="#78a6ec">circle</tspan> <tspan fill="#ee7d84">id</tspan><tspan fill="#9a9a9a">=</tspan><tspan fill="#f0d47e">"connector3pin"</tspan><tspan fill="#9a9a9a">&gt;</tspan></text>
<text x="1742" y="1005.8" font-size="36" xml:space="preserve" textLength="452" lengthAdjust="spacing"><tspan fill="#9a9a9a">&lt;</tspan><tspan fill="#78a6ec">circle</tspan> <tspan fill="#ee7d84">id</tspan><tspan fill="#9a9a9a">=</tspan><tspan fill="#f0d47e">"connector4pin"</tspan><tspan fill="#9a9a9a">&gt;</tspan></text>
<rect x="1616" y="1033" width="2067" height="3" fill="#1e1e1e" />
<rect x="1616" y="1036" width="2067" height="9" fill="#333333" />
<rect x="1616" y="1045" width="2067" height="3" fill="#1e1e1e" />
<rect x="1617.5" y="1051.5" width="2064" height="734" fill="#2c2c2c" stroke="#1e1e1e" stroke-width="3"/>
<rect x="1619" y="1125.6" width="2062" height="2.4" fill="#4a4a4a" />
<rect x="1703" y="1054" width="2.4" height="72" fill="#4a4a4a" />
<rect x="2168" y="1054" width="2.4" height="72" fill="#4a4a4a" />
<path d="M1661,1071 V1107 M1643,1089 H1679" stroke="#ececec" stroke-width="5"/>
<text x="1724" y="1102" font-size="35" fill="#8c8c8c" font-weight="bold" font-style="normal" text-anchor="start" textLength="94" lengthAdjust="spacingAndGlyphs" >Name</text>
<text x="2187" y="1102" font-size="35" fill="#8c8c8c" font-weight="bold" font-style="normal" text-anchor="start" textLength="89" lengthAdjust="spacingAndGlyphs" >Value</text>
<g fill="#fff"><rect x="1643" y="1146.4" width="36" height="7.5" rx="1.5"/><path d="M1652,1147.4 V1144.4 Q1652,1141.4 1655,1141.4 H1667 Q1670,1141.4 1670,1144.4 V1147.4" fill="none" stroke="#fff" stroke-width="3"/><path d="M1645.5,1156.4 H1676.5 L1673.5,1180.4 Q1673,1183.4 1670,1183.4 H1652 Q1649,1183.4 1648.5,1180.4Z"/><path d="M1655,1160.4 L1655.5,1178.4 M1661,1160.4 V1178.4 M1667,1160.4 L1666.5,1178.4" stroke="#2c2c2c" stroke-width="2.6"/></g>
<text x="1719" y="1176.8000000000002" font-size="36" fill="#ffffff" font-weight="normal" font-style="normal" text-anchor="start" >sodipodi:nodetypes</text>
<text x="2183" y="1176.8000000000002" font-size="36" fill="#ffffff" font-weight="normal" font-style="normal" text-anchor="start" textLength="304" lengthAdjust="spacingAndGlyphs" >ccccccccccccccccc</text>
<g fill="#fff"><rect x="1643" y="1215.4" width="36" height="7.5" rx="1.5"/><path d="M1652,1216.4 V1213.4 Q1652,1210.4 1655,1210.4 H1667 Q1670,1210.4 1670,1213.4 V1216.4" fill="none" stroke="#fff" stroke-width="3"/><path d="M1645.5,1225.4 H1676.5 L1673.5,1249.4 Q1673,1252.4 1670,1252.4 H1652 Q1649,1252.4 1648.5,1249.4Z"/><path d="M1655,1229.4 L1655.5,1247.4 M1661,1229.4 V1247.4 M1667,1229.4 L1666.5,1247.4" stroke="#2c2c2c" stroke-width="2.6"/></g>
<text x="1719" y="1245.8000000000002" font-size="36" fill="#ffffff" font-weight="normal" font-style="normal" text-anchor="start" >style</text>
<text x="2183" y="1245.8000000000002" font-size="36" fill="#ffffff" font-weight="normal" font-style="normal" text-anchor="start" >-opacity:1</text>
<g fill="#fff"><rect x="1643" y="1284.4" width="36" height="7.5" rx="1.5"/><path d="M1652,1285.4 V1282.4 Q1652,1279.4 1655,1279.4 H1667 Q1670,1279.4 1670,1282.4 V1285.4" fill="none" stroke="#fff" stroke-width="3"/><path d="M1645.5,1294.4 H1676.5 L1673.5,1318.4 Q1673,1321.4 1670,1321.4 H1652 Q1649,1321.4 1648.5,1318.4Z"/><path d="M1655,1298.4 L1655.5,1316.4 M1661,1298.4 V1316.4 M1667,1298.4 L1666.5,1316.4" stroke="#2c2c2c" stroke-width="2.6"/></g>
<text x="1719" y="1314.8000000000002" font-size="36" fill="#ffffff" font-weight="normal" font-style="normal" text-anchor="start" >stroke-width</text>
<text x="2183" y="1314.8000000000002" font-size="36" fill="#ffffff" font-weight="normal" font-style="normal" text-anchor="start" textLength="37" lengthAdjust="spacingAndGlyphs" >10</text>
<g fill="#fff"><rect x="1643" y="1353.4" width="36" height="7.5" rx="1.5"/><path d="M1652,1354.4 V1351.4 Q1652,1348.4 1655,1348.4 H1667 Q1670,1348.4 1670,1351.4 V1354.4" fill="none" stroke="#fff" stroke-width="3"/><path d="M1645.5,1363.4 H1676.5 L1673.5,1387.4 Q1673,1390.4 1670,1390.4 H1652 Q1649,1390.4 1648.5,1387.4Z"/><path d="M1655,1367.4 L1655.5,1385.4 M1661,1367.4 V1385.4 M1667,1367.4 L1666.5,1385.4" stroke="#2c2c2c" stroke-width="2.6"/></g>
<text x="1719" y="1383.8000000000002" font-size="36" fill="#ffffff" font-weight="normal" font-style="normal" text-anchor="start" >stroke</text>
<text x="2183" y="1383.8000000000002" font-size="36" fill="#ffffff" font-weight="normal" font-style="normal" text-anchor="start" textLength="131" lengthAdjust="spacingAndGlyphs" >#000000</text>
<g fill="#fff"><rect x="1643" y="1422.4" width="36" height="7.5" rx="1.5"/><path d="M1652,1423.4 V1420.4 Q1652,1417.4 1655,1417.4 H1667 Q1670,1417.4 1670,1420.4 V1423.4" fill="none" stroke="#fff" stroke-width="3"/><path d="M1645.5,1432.4 H1676.5 L1673.5,1456.4 Q1673,1459.4 1670,1459.4 H1652 Q1649,1459.4 1648.5,1456.4Z"/><path d="M1655,1436.4 L1655.5,1454.4 M1661,1436.4 V1454.4 M1667,1436.4 L1666.5,1454.4" stroke="#2c2c2c" stroke-width="2.6"/></g>
<text x="1719" y="1452.8000000000002" font-size="36" fill="#ffffff" font-weight="normal" font-style="normal" text-anchor="start" >id</text>
<text x="2183" y="1452.8000000000002" font-size="36" fill="#ffffff" font-weight="normal" font-style="normal" text-anchor="start" textLength="97" lengthAdjust="spacingAndGlyphs" >rect65</text>
<g fill="#fff"><rect x="1643" y="1491.4" width="36" height="7.5" rx="1.5"/><path d="M1652,1492.4 V1489.4 Q1652,1486.4 1655,1486.4 H1667 Q1670,1486.4 1670,1489.4 V1492.4" fill="none" stroke="#fff" stroke-width="3"/><path d="M1645.5,1501.4 H1676.5 L1673.5,1525.4 Q1673,1528.4 1670,1528.4 H1652 Q1649,1528.4 1648.5,1525.4Z"/><path d="M1655,1505.4 L1655.5,1523.4 M1661,1505.4 V1523.4 M1667,1505.4 L1666.5,1523.4" stroke="#2c2c2c" stroke-width="2.6"/></g>
<text x="1719" y="1521.8000000000002" font-size="36" fill="#ffffff" font-weight="normal" font-style="normal" text-anchor="start" >gorn</text>
<text x="2183" y="1521.8000000000002" font-size="36" fill="#ffffff" font-weight="normal" font-style="normal" text-anchor="start" textLength="46" lengthAdjust="spacingAndGlyphs" >0.2</text>
<g fill="#fff"><rect x="1643" y="1560.4" width="36" height="7.5" rx="1.5"/><path d="M1652,1561.4 V1558.4 Q1652,1555.4 1655,1555.4 H1667 Q1670,1555.4 1670,1558.4 V1561.4" fill="none" stroke="#fff" stroke-width="3"/><path d="M1645.5,1570.4 H1676.5 L1673.5,1594.4 Q1673,1597.4 1670,1597.4 H1652 Q1649,1597.4 1648.5,1594.4Z"/><path d="M1655,1574.4 L1655.5,1592.4 M1661,1574.4 V1592.4 M1667,1574.4 L1666.5,1592.4" stroke="#2c2c2c" stroke-width="2.6"/></g>
<text x="1719" y="1590.8000000000002" font-size="36" fill="#ffffff" font-weight="normal" font-style="normal" text-anchor="start" >fill-opacity</text>
<text x="2183" y="1590.8000000000002" font-size="36" fill="#ffffff" font-weight="normal" font-style="normal" text-anchor="start" >1</text>
<g fill="#fff"><rect x="1643" y="1629.4" width="36" height="7.5" rx="1.5"/><path d="M1652,1630.4 V1627.4 Q1652,1624.4 1655,1624.4 H1667 Q1670,1624.4 1670,1627.4 V1630.4" fill="none" stroke="#fff" stroke-width="3"/><path d="M1645.5,1639.4 H1676.5 L1673.5,1663.4 Q1673,1666.4 1670,1666.4 H1652 Q1649,1666.4 1648.5,1663.4Z"/><path d="M1655,1643.4 L1655.5,1661.4 M1661,1643.4 V1661.4 M1667,1643.4 L1666.5,1661.4" stroke="#2c2c2c" stroke-width="2.6"/></g>
<text x="1719" y="1659.8000000000002" font-size="36" fill="#ffffff" font-weight="normal" font-style="normal" text-anchor="start" >fill</text>
<text x="2183" y="1659.8000000000002" font-size="36" fill="#ffffff" font-weight="normal" font-style="normal" text-anchor="start" >none</text>
<g fill="#fff"><rect x="1643" y="1698.4" width="36" height="7.5" rx="1.5"/><path d="M1652,1699.4 V1696.4 Q1652,1693.4 1655,1693.4 H1667 Q1670,1693.4 1670,1696.4 V1699.4" fill="none" stroke="#fff" stroke-width="3"/><path d="M1645.5,1708.4 H1676.5 L1673.5,1732.4 Q1673,1735.4 1670,1735.4 H1652 Q1649,1735.4 1648.5,1732.4Z"/><path d="M1655,1712.4 L1655.5,1730.4 M1661,1712.4 V1730.4 M1667,1712.4 L1666.5,1730.4" stroke="#2c2c2c" stroke-width="2.6"/></g>
<text x="1719" y="1728.8000000000002" font-size="36" fill="#ffffff" font-weight="normal" font-style="normal" text-anchor="start" >d</text>
<text x="2183" y="1728.8000000000002" font-size="36" fill="#ffffff" font-weight="normal" font-style="normal" text-anchor="start" textLength="1486" lengthAdjust="spacingAndGlyphs" >M 0,0 V 629.92371 H 415.853 551.18834 V 0 H 435.56737 Z m 475.89127,20.75196 c 34.7866,0.00...</text>
<rect x="3713" y="723" width="107" height="2" fill="#2b2b2b" />
<rect x="3713" y="957" width="107" height="2" fill="#2b2b2b" />
<rect x="3713" y="1192" width="107" height="2" fill="#2b2b2b" />
<rect x="3713" y="1536" width="107" height="2" fill="#2b2b2b" />
<rect x="3713" y="1659" width="107" height="2" fill="#2b2b2b" />
<path d="M3746,320.5 H3766 L3776.5,331 V351.5 H3746Z" fill="none" stroke="#ececec" stroke-width="5" stroke-linejoin="round"/><path d="M3765,321 V332 H3776" fill="none" stroke="#ececec" stroke-width="4"/><path d="M3783,307 L3786,314 L3793,314 L3788,319 L3790,326 L3783,322 L3776,326 L3778,319 L3773,314 L3780,314Z" fill="#009a00"/>
<path d="M3745,423 H3762 L3767,429 H3786 V435 H3758 L3750,459 H3745Z" fill="#ececec"/><path d="M3760,439 H3791 L3783,461 H3751Z" fill="#ececec"/>
<path d="M3746,546 L3753,536 H3759 V541 H3756 L3751,550 H3763 V555 H3770 V550 H3782 L3777,541 H3774 V536 H3780 L3787,546 V574 H3746Z" fill="#ececec"/><rect x="3763" y="529" width="6" height="14" fill="#009a00"/><path d="M3757,541 H3775 L3766,551Z" fill="#009a00"/>
<rect x="3755" y="643" width="23" height="7" fill="#ececec"/><path d="M3746,653 H3787 V672 H3779 V664 H3754 V672 H3746Z" fill="#ececec"/><rect x="3755" y="668" width="23" height="13" fill="#ececec"/>
<rect x="3662" y="756" width="150" height="66" fill="#ffffff"/><rect x="3662" y="819" width="150" height="3" fill="#dcdcdc"/>
<rect x="3674" y="759.5" width="6" height="6" fill="#c8c8c8"/>
<rect x="3674" y="771.5" width="6" height="6" fill="#c8c8c8"/>
<rect x="3674" y="783.5" width="6" height="6" fill="#c8c8c8"/>
<rect x="3674" y="795.5" width="6" height="6" fill="#c8c8c8"/>
<rect x="3674" y="807.5" width="6" height="6" fill="#c8c8c8"/>
<text x="3700" y="800.8" font-size="37" fill="#1a1a1a" font-weight="normal" font-style="normal" text-anchor="start" textLength="41" lengthAdjust="spacingAndGlyphs" >EN</text>
<rect x="3777.5" y="766.5" width="22" height="12" rx="3" fill="none" stroke="#9a7a8a" stroke-width="3"/><path d="M3777.5,798 V809 H3799.5 V798" fill="none" stroke="#1a6ac0" stroke-width="3"/>
<path d="M3776.5,892 V887 L3766,876.5 H3746 V915.5 H3776.5 V906" fill="none" stroke="#ececec" stroke-width="5" stroke-linejoin="round"/><path d="M3765,877 V888 H3776" fill="none" stroke="#ececec" stroke-width="4"/><rect x="3766" y="897" width="14" height="6" fill="#009a00"/><path d="M3779,891 L3791,900 L3779,909Z" fill="#009a00"/>
<path d="M3753,1014 H3773 Q3782,1014 3782,1023 Q3782,1031 3774,1031" fill="none" stroke="#ececec" stroke-width="6"/><path d="M3746,1014 L3757,1004 V1024Z" fill="#ececec"/>
<path d="M3781,1122 H3761 Q3752,1122 3752,1131 Q3752,1139 3760,1139" fill="none" stroke="#8c8c8c" stroke-width="6"/><path d="M3788,1122 L3777,1112 V1132Z" fill="#8c8c8c"/>
<rect x="3743" y="1231" width="24" height="30" fill="#ececec"/><rect x="3758" y="1248" width="32" height="30" fill="#ececec" stroke="#333" stroke-width="3"/>
<path d="M3752,1342 L3774,1376 M3780,1342 L3758,1376" stroke="#ececec" stroke-width="5"/><circle cx="3753" cy="1379" r="7" fill="none" stroke="#ececec" stroke-width="5"/><circle cx="3779" cy="1379" r="7" fill="none" stroke="#ececec" stroke-width="5"/>
<rect x="3744.5" y="1460.5" width="40" height="40" fill="none" stroke="#ececec" stroke-width="3"/><rect x="3755" y="1455" width="19" height="9" rx="2" fill="#ececec"/><path d="M3751,1467 H3778 V1490 L3772,1496 H3751Z" fill="#ececec"/>
<rect x="3715.5" y="1551.5" width="103" height="96" rx="19" fill="#333" stroke="#1e1e1e" stroke-width="3"/><path d="M3748,1591 H3785 L3766.5,1609Z" fill="#ececec"/>
<rect x="0" y="1805" width="3838" height="200" fill="#333333" />
<rect x="410.0" y="1810" width="57.5" height="48" fill="#2e2e2e"/><rect x="413.0" y="1813" width="51.5" height="42" fill="#1a1a1a"/><rect x="410.0" y="1861" width="57.5" height="48" fill="#d76416"/><rect x="413.0" y="1864" width="51.5" height="42" fill="#d45500"/><rect x="469.8" y="1810" width="57.5" height="48" fill="#454545"/><rect x="472.8" y="1813" width="51.5" height="42" fill="#333333"/><rect x="469.8" y="1861" width="57.5" height="48" fill="#ff7316"/><rect x="472.8" y="1864" width="51.5" height="42" fill="#ff6600"/><rect x="529.7" y="1810" width="57.5" height="48" fill="#5d5d5d"/><rect x="532.7" y="1813" width="51.5" height="42" fill="#4d4d4d"/><rect x="529.7" y="1861" width="57.5" height="48" fill="#ff8a3d"/><rect x="532.7" y="1864" width="51.5" height="42" fill="#ff7f2a"/><rect x="589.5" y="1810" width="57.5" height="48" fill="#737373"/><rect x="592.5" y="1813" width="51.5" height="42" fill="#666666"/><rect x="589.5" y="1861" width="57.5" height="48" fill="#ffa264"/><rect x="592.5" y="1864" width="51.5" height="42" fill="#ff9955"/><rect x="649.3" y="1810" width="57.5" height="48" fill="#a2a2a2"/><rect x="652.3" y="1813" width="51.5" height="42" fill="#999999"/><rect x="649.3" y="1861" width="57.5" height="48" fill="#ffb98b"/><rect x="652.3" y="1864" width="51.5" height="42" fill="#ffb380"/><rect x="709.1" y="1810" width="57.5" height="48" fill="#b9b9b9"/><rect x="712.1" y="1813" width="51.5" height="42" fill="#b3b3b3"/><rect x="709.1" y="1861" width="57.5" height="48" fill="#ffd0b1"/><rect x="712.1" y="1864" width="51.5" height="42" fill="#ffccaa"/><rect x="769.0" y="1810" width="57.5" height="48" fill="#d0d0d0"/><rect x="772.0" y="1813" width="51.5" height="42" fill="#cccccc"/><rect x="769.0" y="1861" width="57.5" height="48" fill="#ffe8d8"/><rect x="772.0" y="1864" width="51.5" height="42" fill="#ffe6d5"/><rect x="828.8" y="1810" width="57.5" height="48" fill="#e8e8e8"/><rect x="831.8" y="1813" width="51.5" height="42" fill="#e6e6e6"/><rect x="828.8" y="1861" width="57.5" height="48" fill="#3b2b20"/><rect x="831.8" y="1864" width="51.5" height="42" fill="#28170b"/><rect x="888.6" y="1810" width="57.5" height="48" fill="#ededed"/><rect x="891.6" y="1813" width="51.5" height="42" fill="#ececec"/><rect x="888.6" y="1861" width="57.5" height="48" fill="#5f3f2a"/><rect x="891.6" y="1864" width="51.5" height="42" fill="#502d16"/><rect x="948.5" y="1810" width="57.5" height="48" fill="#f3f3f3"/><rect x="951.5" y="1813" width="51.5" height="42" fill="#f2f2f2"/><rect x="948.5" y="1861" width="57.5" height="48" fill="#845434"/><rect x="951.5" y="1864" width="51.5" height="42" fill="#784421"/><rect x="1008.3" y="1810" width="57.5" height="48" fill="#f9f9f9"/><rect x="1011.3" y="1813" width="51.5" height="42" fill="#f9f9f9"/><rect x="1008.3" y="1861" width="57.5" height="48" fill="#a8683e"/><rect x="1011.3" y="1864" width="51.5" height="42" fill="#a05a2c"/><rect x="1068.1" y="1810" width="57.5" height="48" fill="#8b1616"/><rect x="1071.1" y="1813" width="51.5" height="42" fill="#800000"/><rect x="1068.1" y="1861" width="57.5" height="48" fill="#cc7d49"/><rect x="1071.1" y="1864" width="51.5" height="42" fill="#c87137"/><rect x="1128.0" y="1810" width="57.5" height="48" fill="#ff1616"/><rect x="1131.0" y="1813" width="51.5" height="42" fill="#ff0000"/><rect x="1128.0" y="1861" width="57.5" height="48" fill="#d6976d"/><rect x="1131.0" y="1864" width="51.5" height="42" fill="#d38d5f"/><rect x="1187.8" y="1810" width="57.5" height="48" fill="#8b8b16"/><rect x="1190.8" y="1813" width="51.5" height="42" fill="#808000"/><rect x="1187.8" y="1861" width="57.5" height="48" fill="#e0b191"/><rect x="1190.8" y="1864" width="51.5" height="42" fill="#deaa87"/><rect x="1247.6" y="1810" width="57.5" height="48" fill="#ffff16"/><rect x="1250.6" y="1813" width="51.5" height="42" fill="#ffff00"/><rect x="1247.6" y="1861" width="57.5" height="48" fill="#eacbb6"/><rect x="1250.6" y="1864" width="51.5" height="42" fill="#e9c6af"/><rect x="1307.4" y="1810" width="57.5" height="48" fill="#168b16"/><rect x="1310.4" y="1813" width="51.5" height="42" fill="#008000"/><rect x="1307.4" y="1861" width="57.5" height="48" fill="#f4e5da"/><rect x="1310.4" y="1864" width="51.5" height="42" fill="#f4e3d7"/><rect x="1367.3" y="1810" width="57.5" height="48" fill="#16ff16"/><rect x="1370.3" y="1813" width="51.5" height="42" fill="#00ff00"/><rect x="1367.3" y="1861" width="57.5" height="48" fill="#373330"/><rect x="1370.3" y="1864" width="51.5" height="42" fill="#241f1c"/><rect x="1427.1" y="1810" width="57.5" height="48" fill="#168b8b"/><rect x="1430.1" y="1813" width="51.5" height="42" fill="#008080"/><rect x="1427.1" y="1861" width="57.5" height="48" fill="#584f49"/><rect x="1430.1" y="1864" width="51.5" height="42" fill="#483e37"/><rect x="1486.9" y="1810" width="57.5" height="48" fill="#16ffff"/><rect x="1489.9" y="1813" width="51.5" height="42" fill="#00ffff"/><rect x="1486.9" y="1861" width="57.5" height="48" fill="#796b62"/><rect x="1489.9" y="1864" width="51.5" height="42" fill="#6c5d53"/><rect x="1546.8" y="1810" width="57.5" height="48" fill="#16168b"/><rect x="1549.8" y="1813" width="51.5" height="42" fill="#000080"/><rect x="1546.8" y="1861" width="57.5" height="48" fill="#9a877b"/><rect x="1549.8" y="1864" width="51.5" height="42" fill="#917c6f"/><rect x="1606.6" y="1810" width="57.5" height="48" fill="#1616ff"/><rect x="1609.6" y="1813" width="51.5" height="42" fill="#0000ff"/><rect x="1606.6" y="1861" width="57.5" height="48" fill="#b3a59c"/><rect x="1609.6" y="1864" width="51.5" height="42" fill="#ac9d93"/><rect x="1666.4" y="1810" width="57.5" height="48" fill="#8b168b"/><rect x="1669.4" y="1813" width="51.5" height="42" fill="#800080"/><rect x="1666.4" y="1861" width="57.5" height="48" fill="#ccc3bd"/><rect x="1669.4" y="1864" width="51.5" height="42" fill="#c8beb7"/><rect x="1726.3" y="1810" width="57.5" height="48" fill="#ff16ff"/><rect x="1729.3" y="1813" width="51.5" height="42" fill="#ff00ff"/><rect x="1726.3" y="1861" width="57.5" height="48" fill="#e5e0de"/><rect x="1729.3" y="1864" width="51.5" height="42" fill="#e3dedb"/><rect x="1786.1" y="1810" width="57.5" height="48" fill="#3e1616"/><rect x="1789.1" y="1813" width="51.5" height="42" fill="#2b0000"/><rect x="1786.1" y="1861" width="57.5" height="48" fill="#3e3516"/><rect x="1789.1" y="1864" width="51.5" height="42" fill="#2b2200"/><rect x="1845.9" y="1810" width="57.5" height="48" fill="#641616"/><rect x="1848.9" y="1813" width="51.5" height="42" fill="#550000"/><rect x="1845.9" y="1861" width="57.5" height="48" fill="#645416"/><rect x="1848.9" y="1864" width="51.5" height="42" fill="#554400"/><rect x="1905.8" y="1810" width="57.5" height="48" fill="#8b1616"/><rect x="1908.8" y="1813" width="51.5" height="42" fill="#800000"/><rect x="1905.8" y="1861" width="57.5" height="48" fill="#8b7316"/><rect x="1908.8" y="1864" width="51.5" height="42" fill="#806600"/><rect x="1965.6" y="1810" width="57.5" height="48" fill="#b11616"/><rect x="1968.6" y="1813" width="51.5" height="42" fill="#aa0000"/><rect x="1965.6" y="1861" width="57.5" height="48" fill="#b19216"/><rect x="1968.6" y="1864" width="51.5" height="42" fill="#aa8800"/><rect x="2025.4" y="1810" width="57.5" height="48" fill="#d71616"/><rect x="2028.4" y="1813" width="51.5" height="42" fill="#d40000"/><rect x="2025.4" y="1861" width="57.5" height="48" fill="#d7b116"/><rect x="2028.4" y="1864" width="51.5" height="42" fill="#d4aa00"/><rect x="2085.2" y="1810" width="57.5" height="48" fill="#ff1616"/><rect x="2088.2" y="1813" width="51.5" height="42" fill="#ff0000"/><rect x="2085.2" y="1861" width="57.5" height="48" fill="#ffd016"/><rect x="2088.2" y="1864" width="51.5" height="42" fill="#ffcc00"/><rect x="2145.1" y="1810" width="57.5" height="48" fill="#ff3d3d"/><rect x="2148.1" y="1813" width="51.5" height="42" fill="#ff2a2a"/><rect x="2145.1" y="1861" width="57.5" height="48" fill="#ffd73d"/><rect x="2148.1" y="1864" width="51.5" height="42" fill="#ffd42a"/><rect x="2204.9" y="1810" width="57.5" height="48" fill="#ff6464"/><rect x="2207.9" y="1813" width="51.5" height="42" fill="#ff5555"/><rect x="2204.9" y="1861" width="57.5" height="48" fill="#ffe064"/><rect x="2207.9" y="1864" width="51.5" height="42" fill="#ffdd55"/><rect x="2264.7" y="1810" width="57.5" height="48" fill="#ff8b8b"/><rect x="2267.7" y="1813" width="51.5" height="42" fill="#ff8080"/><rect x="2264.7" y="1861" width="57.5" height="48" fill="#ffe88b"/><rect x="2267.7" y="1864" width="51.5" height="42" fill="#ffe680"/><rect x="2324.6" y="1810" width="57.5" height="48" fill="#ffb1b1"/><rect x="2327.6" y="1813" width="51.5" height="42" fill="#ffaaaa"/><rect x="2324.6" y="1861" width="57.5" height="48" fill="#ffefb1"/><rect x="2327.6" y="1864" width="51.5" height="42" fill="#ffeeaa"/><rect x="2384.4" y="1810" width="57.5" height="48" fill="#ffd8d8"/><rect x="2387.4" y="1813" width="51.5" height="42" fill="#ffd5d5"/><rect x="2384.4" y="1861" width="57.5" height="48" fill="#fff6d8"/><rect x="2387.4" y="1864" width="51.5" height="42" fill="#fff6d5"/><rect x="2444.2" y="1810" width="57.5" height="48" fill="#3b2020"/><rect x="2447.2" y="1813" width="51.5" height="42" fill="#280b0b"/><rect x="2444.2" y="1861" width="57.5" height="48" fill="#3b3520"/><rect x="2447.2" y="1864" width="51.5" height="42" fill="#28220b"/><rect x="2504.0" y="1810" width="57.5" height="48" fill="#5f2a2a"/><rect x="2507.0" y="1813" width="51.5" height="42" fill="#501616"/><rect x="2504.0" y="1861" width="57.5" height="48" fill="#5f542a"/><rect x="2507.0" y="1864" width="51.5" height="42" fill="#504416"/><rect x="2563.9" y="1810" width="57.5" height="48" fill="#843434"/><rect x="2566.9" y="1813" width="51.5" height="42" fill="#782121"/><rect x="2563.9" y="1861" width="57.5" height="48" fill="#847434"/><rect x="2566.9" y="1864" width="51.5" height="42" fill="#786721"/><rect x="2623.7" y="1810" width="57.5" height="48" fill="#a83e3e"/><rect x="2626.7" y="1813" width="51.5" height="42" fill="#a02c2c"/><rect x="2623.7" y="1861" width="57.5" height="48" fill="#a8933e"/><rect x="2626.7" y="1864" width="51.5" height="42" fill="#a0892c"/><rect x="2683.5" y="1810" width="57.5" height="48" fill="#cc4949"/><rect x="2686.5" y="1813" width="51.5" height="42" fill="#c83737"/><rect x="2683.5" y="1861" width="57.5" height="48" fill="#ccb249"/><rect x="2686.5" y="1864" width="51.5" height="42" fill="#c8ab37"/><rect x="2743.4" y="1810" width="57.5" height="48" fill="#d66d6d"/><rect x="2746.4" y="1813" width="51.5" height="42" fill="#d35f5f"/><rect x="2743.4" y="1861" width="57.5" height="48" fill="#d6c26d"/><rect x="2746.4" y="1864" width="51.5" height="42" fill="#d3bc5f"/><rect x="2803.2" y="1810" width="57.5" height="48" fill="#e09191"/><rect x="2806.2" y="1813" width="51.5" height="42" fill="#de8787"/><rect x="2803.2" y="1861" width="57.5" height="48" fill="#e0d191"/><rect x="2806.2" y="1864" width="51.5" height="42" fill="#decd87"/><rect x="2863.0" y="1810" width="57.5" height="48" fill="#eab6b6"/><rect x="2866.0" y="1813" width="51.5" height="42" fill="#e9afaf"/><rect x="2863.0" y="1861" width="57.5" height="48" fill="#eae0b6"/><rect x="2866.0" y="1864" width="51.5" height="42" fill="#e9ddaf"/><rect x="2922.9" y="1810" width="57.5" height="48" fill="#f4dada"/><rect x="2925.9" y="1813" width="51.5" height="42" fill="#f4d7d7"/><rect x="2922.9" y="1861" width="57.5" height="48" fill="#f4efda"/><rect x="2925.9" y="1864" width="51.5" height="42" fill="#f4eed7"/><rect x="2982.7" y="1810" width="57.5" height="48" fill="#373030"/><rect x="2985.7" y="1813" width="51.5" height="42" fill="#241c1c"/><rect x="2982.7" y="1861" width="57.5" height="48" fill="#373530"/><rect x="2985.7" y="1864" width="51.5" height="42" fill="#24221c"/><rect x="3042.5" y="1810" width="57.5" height="48" fill="#584949"/><rect x="3045.5" y="1813" width="51.5" height="42" fill="#483737"/><rect x="3042.5" y="1861" width="57.5" height="48" fill="#585549"/><rect x="3045.5" y="1864" width="51.5" height="42" fill="#484537"/><rect x="3102.3" y="1810" width="57.5" height="48" fill="#796262"/><rect x="3105.3" y="1813" width="51.5" height="42" fill="#6c5353"/><rect x="3102.3" y="1861" width="57.5" height="48" fill="#797462"/><rect x="3105.3" y="1864" width="51.5" height="42" fill="#6c6753"/><rect x="3162.2" y="1810" width="57.5" height="48" fill="#9a7b7b"/><rect x="3165.2" y="1813" width="51.5" height="42" fill="#916f6f"/><rect x="3162.2" y="1861" width="57.5" height="48" fill="#9a947b"/><rect x="3165.2" y="1864" width="51.5" height="42" fill="#918a6f"/><rect x="3222.0" y="1810" width="57.5" height="48" fill="#b39c9c"/><rect x="3225.0" y="1813" width="51.5" height="42" fill="#ac9393"/><rect x="3222.0" y="1861" width="57.5" height="48" fill="#b3ae9c"/><rect x="3225.0" y="1864" width="51.5" height="42" fill="#aca793"/><rect x="3281.8" y="1810" width="57.5" height="48" fill="#ccbdbd"/><rect x="3284.8" y="1813" width="51.5" height="42" fill="#c8b7b7"/><rect x="3281.8" y="1861" width="57.5" height="48" fill="#ccc9bd"/><rect x="3284.8" y="1864" width="51.5" height="42" fill="#c8c4b7"/><rect x="3341.7" y="1810" width="57.5" height="48" fill="#e5dede"/><rect x="3344.7" y="1813" width="51.5" height="42" fill="#e3dbdb"/><rect x="3341.7" y="1861" width="57.5" height="48" fill="#e5e4de"/><rect x="3344.7" y="1864" width="51.5" height="42" fill="#e3e2db"/><rect x="3401.5" y="1810" width="57.5" height="48" fill="#3e2616"/><rect x="3404.5" y="1813" width="51.5" height="42" fill="#2b1100"/><rect x="3401.5" y="1861" width="57.5" height="48" fill="#353e16"/><rect x="3404.5" y="1864" width="51.5" height="42" fill="#222b00"/><rect x="3461.3" y="1810" width="57.5" height="48" fill="#643516"/><rect x="3464.3" y="1813" width="51.5" height="42" fill="#552200"/><rect x="3461.3" y="1861" width="57.5" height="48" fill="#546416"/><rect x="3464.3" y="1864" width="51.5" height="42" fill="#445500"/><rect x="3521.2" y="1810" width="57.5" height="48" fill="#8b4516"/><rect x="3524.2" y="1813" width="51.5" height="42" fill="#803300"/><rect x="3521.2" y="1861" width="57.5" height="48" fill="#738b16"/><rect x="3524.2" y="1864" width="51.5" height="42" fill="#668000"/><rect x="3581.0" y="1810" width="57.5" height="48" fill="#b15416"/><rect x="3584.0" y="1813" width="51.5" height="42" fill="#aa4400"/><rect x="3581.0" y="1861" width="57.5" height="48" fill="#92b116"/><rect x="3584.0" y="1864" width="51.5" height="42" fill="#88aa00"/>
<rect x="2" y="1810" width="99" height="99" fill="#ffffff" />
<path d="M9,1818 L95,1902 M95,1818 L9,1902" stroke="#c8223a" stroke-width="7" stroke-linecap="round"/><circle cx="52" cy="1860" r="17" fill="#000" opacity="0.25"/>
<rect x="105" y="1810" width="98" height="99" fill="#1e1e1e" />
<rect x="107" y="1812" width="94" height="95" fill="#000000" />
<circle cx="154" cy="1859" r="29" fill="none" stroke="#b9b9b9" stroke-width="6"/>
<rect x="206" y="1810" width="99" height="99" fill="#808080" />
<rect x="308" y="1810" width="99" height="99" fill="#ffffff" />
<path d="M3655,1869 L3670.6,1853 L3686,1869" fill="none" stroke="#808080" stroke-width="6"/><path d="M3722,1849 L3740.5,1866 L3759,1849" fill="none" stroke="#ececec" stroke-width="6"/>
<rect x="3785" y="1851" width="42" height="6" fill="#ececec" />
<rect x="3785" y="1867" width="42" height="6" fill="#ececec" />
<rect x="3785" y="1883" width="42" height="6" fill="#ececec" />
<text x="54" y="1954" font-size="35" fill="#f2f2f2" font-weight="normal" font-style="normal" text-anchor="start" textLength="52" lengthAdjust="spacingAndGlyphs" >Fill:</text>
<text x="200" y="1954" font-size="35" fill="#f2f2f2" font-weight="normal" font-style="italic" text-anchor="start" textLength="85" lengthAdjust="spacingAndGlyphs" >None</text>
<text x="0" y="2004" font-size="35" fill="#f2f2f2" font-weight="normal" font-style="normal" text-anchor="start" textLength="106" lengthAdjust="spacingAndGlyphs" >Stroke:</text>
<rect x="167" y="1966" width="150" height="60" rx="10" fill="#000"/>
<text x="353" y="2004" font-size="35" fill="#f2f2f2" font-weight="normal" font-style="normal" text-anchor="start" textLength="82" lengthAdjust="spacingAndGlyphs" >0.254</text>
<text x="467" y="1977" font-size="35" fill="#f2f2f2" font-weight="normal" font-style="normal" text-anchor="start" textLength="35" lengthAdjust="spacingAndGlyphs" >O:</text>
<rect x="523.5" y="1917.3" width="210" height="120" rx="19" fill="#2e2e2e" stroke="#1e1e1e" stroke-width="3"/>
<rect x="633" y="1918.8" width="2" height="100" fill="#272727" />
<rect x="684" y="1918.8" width="2" height="100" fill="#272727" />
<text x="543" y="1977" font-size="35" fill="#f2f2f2" font-weight="normal" font-style="normal" text-anchor="start" textLength="53" lengthAdjust="spacingAndGlyphs" >100</text>
<rect x="641" y="1962" width="36" height="6" fill="#ececec" />
<rect x="691.6" y="1962" width="36" height="6" fill="#4a4a4a" />
<rect x="706.6" y="1947" width="6" height="36" fill="#4a4a4a" />
<rect x="782" y="1939" width="9" height="51" fill="#ffffff" />
<text x="808" y="1977" font-size="35" fill="#f2f2f2" font-weight="normal" font-style="italic" text-anchor="start" textLength="84" lengthAdjust="spacingAndGlyphs" >[root]</text>
<g fill="none" stroke="#8a8a8a" stroke-width="5"><path d="M955,1968 Q978,1946 1001,1968 Q978,1990 955,1968Z"/><circle cx="978" cy="1968" r="5" fill="#8a8a8a"/><path d="M978,1948 V1940 M965,1951 L960,1944 M991,1951 L996,1944"/></g>
<rect x="1070" y="1960" width="28" height="26" fill="#8a8a8a"/><path d="M1090,1962 V1956 A8.5,8.5 0 0 1 1107,1956 V1962" fill="none" stroke="#8a8a8a" stroke-width="5.5"/>
<rect x="1143" y="1933" width="2" height="65" fill="#2b2b2b" />
<text x="1162" y="1977.6" font-size="35" fill="#f2f2f2" textLength="1140" lengthAdjust="spacingAndGlyphs" xml:space="preserve"><tspan font-weight="bold">Shift:</tspan> drag to add nodes to the selection, click to toggle object selection</text>
<path d="M2735,1948.5 V1983.5 L2716,1966Z" fill="#888"/><path d="M2933,1948.5 V1983.5 L2951,1966Z" fill="#888"/>
<rect x="2782.5" y="1917" width="103" height="110" rx="19" fill="#333" stroke="#1e1e1e" stroke-width="3"/><path d="M2815,1956 H2852 L2833.5,1974.5Z" fill="#888"/>
<rect x="2997" y="1933" width="2" height="72" fill="#2b2b2b" />
<text x="3017" y="1953.6" font-size="35" fill="#f2f2f2" font-weight="normal" font-style="normal" text-anchor="start" textLength="30" lengthAdjust="spacingAndGlyphs" >X:</text>
<text x="3172" y="1953.6" font-size="35" fill="#f2f2f2" font-weight="normal" font-style="normal" text-anchor="end" >2.93</text>
<text x="3017" y="2004" font-size="35" fill="#f2f2f2" font-weight="normal" font-style="normal" text-anchor="start" textLength="30" lengthAdjust="spacingAndGlyphs" >Y:</text>
<text x="3172" y="2004" font-size="35" fill="#f2f2f2" font-weight="normal" font-style="normal" text-anchor="end" >-1.93</text>
<text x="3209" y="1977" font-size="35" fill="#f2f2f2" font-weight="normal" font-style="normal" text-anchor="start" textLength="29" lengthAdjust="spacingAndGlyphs" >Z:</text>
<rect x="3252.5" y="1916.9" width="230" height="120" rx="19" fill="#2e2e2e" stroke="#1e1e1e" stroke-width="3"/>
<rect x="3381.6" y="1918.4" width="2" height="100" fill="#272727" />
<rect x="3432" y="1918.4" width="2" height="100" fill="#272727" />
<text x="3281" y="1977" font-size="35" fill="#f2f2f2" font-weight="normal" font-style="normal" text-anchor="start" textLength="84" lengthAdjust="spacingAndGlyphs" >370%</text>
<rect x="3388.5" y="1962" width="36" height="6" fill="#ececec" />
<rect x="3439.6" y="1962" width="36" height="6" fill="#ececec" />
<rect x="3454.6" y="1947" width="6" height="36" fill="#ececec" />
<text x="3516" y="1977" font-size="35" fill="#f2f2f2" font-weight="normal" font-style="normal" text-anchor="start" textLength="28" lengthAdjust="spacingAndGlyphs" >R:</text>
<rect x="3559.5" y="1916.9" width="247" height="120" rx="19" fill="#2e2e2e" stroke="#1e1e1e" stroke-width="3"/>
<rect x="3704.7" y="1918.4" width="2" height="100" fill="#272727" />
<rect x="3755.8" y="1918.4" width="2" height="100" fill="#272727" />
<text x="3605" y="1977" font-size="35" fill="#f2f2f2" font-weight="normal" font-style="normal" text-anchor="start" textLength="77" lengthAdjust="spacingAndGlyphs" >0.00°</text>
<rect x="3713" y="1962" width="36" height="6" fill="#ececec" />
<rect x="3763" y="1962" width="36" height="6" fill="#ececec" />
<rect x="3778" y="1947" width="6" height="36" fill="#ececec" /></svg></body></html>
